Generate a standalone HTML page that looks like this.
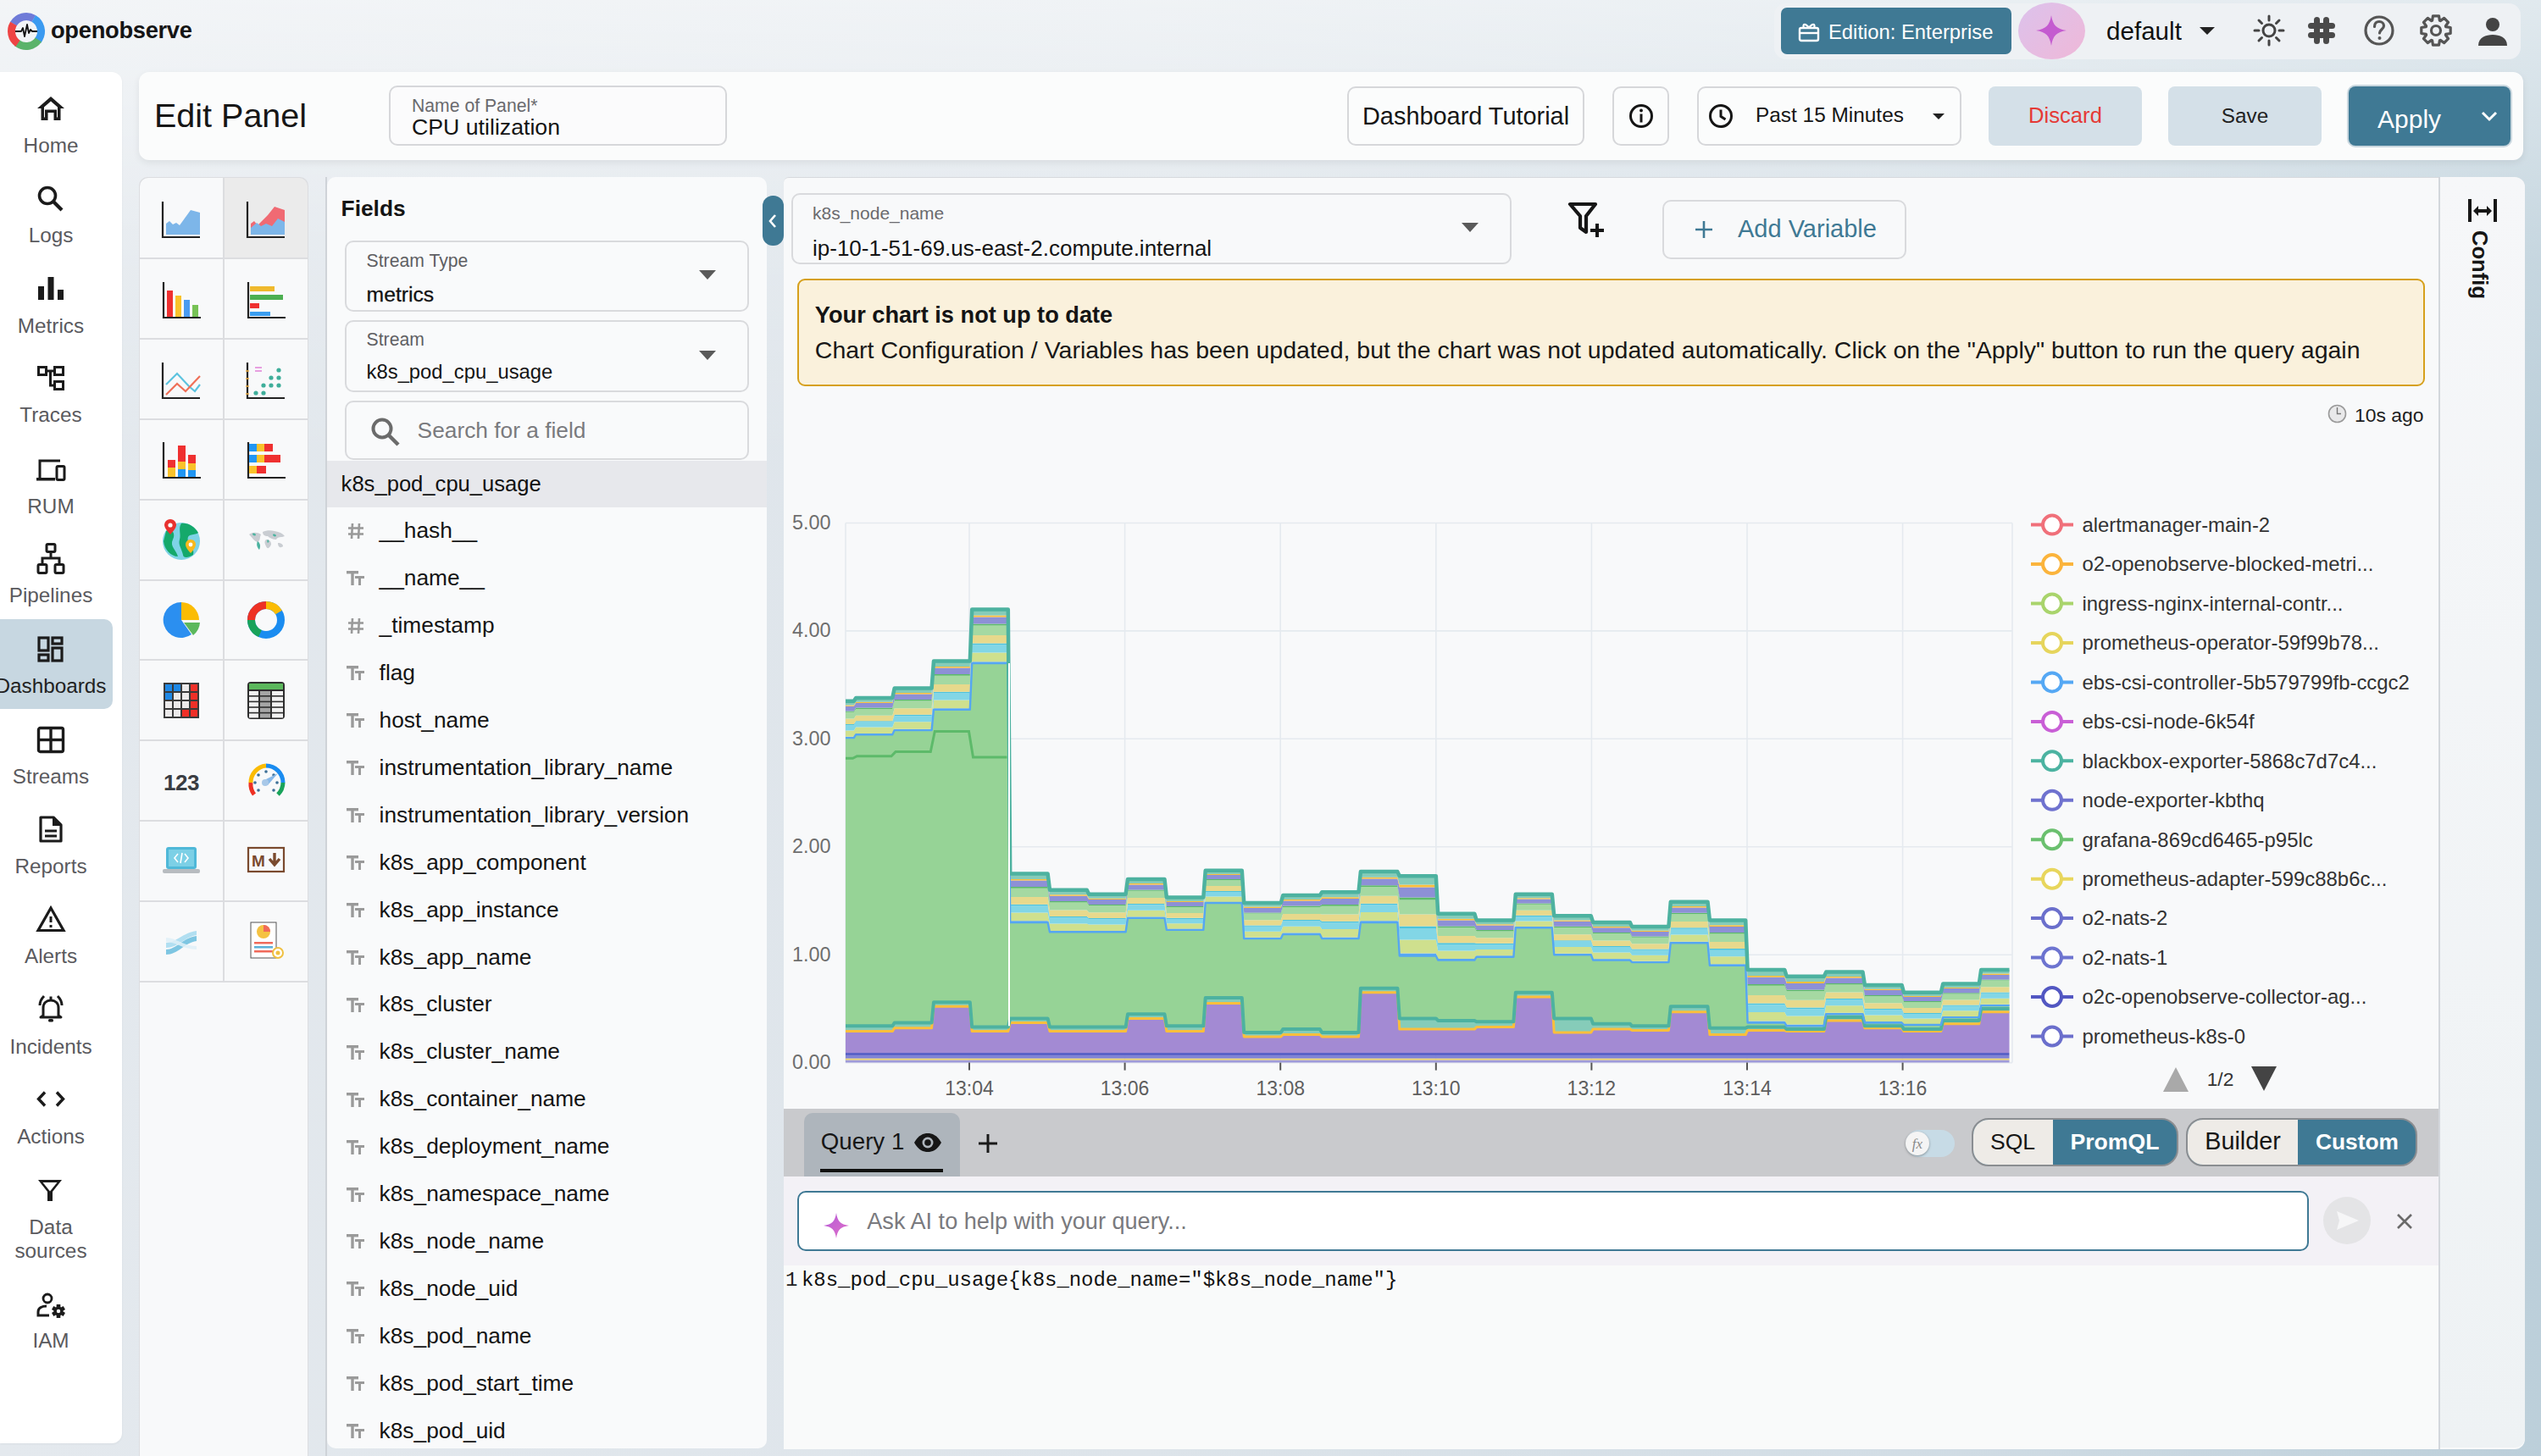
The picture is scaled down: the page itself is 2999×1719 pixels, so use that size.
<!DOCTYPE html><html><head><meta charset="utf-8"><style>
html,body{margin:0;padding:0;}
body{width:2999px;height:1719px;overflow:hidden;position:relative;font-family:"Liberation Sans",sans-serif;
background:linear-gradient(to bottom,rgba(255,255,255,0.55) 0%,rgba(255,255,255,0.15) 18%,rgba(255,255,255,0) 32%),linear-gradient(to right,#e4e9ee 0%,#dde4ea 45%,#d2dde5 75%,#bccfda 100%);}
.t{position:absolute;white-space:nowrap;line-height:1;}
.b{position:absolute;box-sizing:border-box;}
svg.b{overflow:visible;}
</style></head><body>

<svg class="b" style="left:9px;top:15px;" width="44" height="44" viewBox="0 0 44 44">
<circle cx="22" cy="22" r="17.5" fill="none" stroke="#6f7bd8" stroke-width="9" stroke-dasharray="27.5 200" transform="rotate(-150 22 22)"/>
<circle cx="22" cy="22" r="17.5" fill="none" stroke="#3b9af0" stroke-width="9" stroke-dasharray="30 200" transform="rotate(-60 22 22)"/>
<circle cx="22" cy="22" r="17.5" fill="none" stroke="#5bb36a" stroke-width="9" stroke-dasharray="29 200" transform="rotate(35 22 22)"/>
<circle cx="22" cy="22" r="17.5" fill="none" stroke="#ee4444" stroke-width="9" stroke-dasharray="26 200" transform="rotate(125 22 22)"/>
<polyline points="9,22 16,22 18,18 20,28 23,14 25,24 27,20 29,22 35,22" fill="none" stroke="#111" stroke-width="1.8" stroke-linejoin="round"/>
</svg>
<div class="t" style="left:60.0px;top:21.9px;font-size:27.3px;color:#151515;font-weight:bold;letter-spacing:-0.3px;">openobserve</div>
<div class="b" style="left:2094px;top:4px;width:881px;height:66px;background:#eef1f4;border-radius:14px;"></div>
<div class="b" style="left:2102px;top:9px;width:272px;height:55px;background:#3f7994;border-radius:7px;"></div>
<svg class="b" style="left:2122px;top:24px;" width="26" height="26" viewBox="0 0 26 26"><rect x="2" y="9" width="22" height="15" rx="2" fill="none" stroke="#fff" stroke-width="2.4"/><line x1="2" y1="15" x2="24" y2="15" stroke="#fff" stroke-width="2.4"/><path d="M13 9 C 9 3, 5 4, 7 9 M13 9 C 17 3, 21 4, 19 9" fill="none" stroke="#fff" stroke-width="2.2"/></svg>
<div class="t" style="left:2158.0px;top:25.9px;font-size:23.8px;color:#ffffff;font-weight:normal;">Edition: Enterprise</div>
<div class="b" style="left:2382px;top:3px;width:79px;height:67px;border-radius:50%;background:linear-gradient(135deg,#dcc2ec,#efb8d8);"></div>
<svg class="b" style="left:2402px;top:17px;" width="38" height="38" viewBox="0 0 38 38"><path d="M19 1 C 21 13, 25 17, 37 19 C 25 21, 21 25, 19 37 C 17 25, 13 21, 1 19 C 13 17, 17 13, 19 1 Z" fill="#c45bd0"/></svg>
<div class="t" style="left:2486.0px;top:21.9px;font-size:29.6px;color:#111;font-weight:normal;">default</div>
<svg class="b" style="left:2596px;top:32px;" width="18" height="10" viewBox="0 0 18 10"><path d="M0 0 L18 0 L9 9 Z" fill="#222"/></svg>
<svg class="b" style="left:2658px;top:16px;" width="40" height="40" viewBox="0 0 40 40"><circle cx="20" cy="20" r="7" fill="none" stroke="#444" stroke-width="3"/><line x1="32.0" y1="20.0" x2="37.0" y2="20.0" stroke="#444" stroke-width="3" stroke-linecap="round"/><line x1="28.5" y1="28.5" x2="32.0" y2="32.0" stroke="#444" stroke-width="3" stroke-linecap="round"/><line x1="20.0" y1="32.0" x2="20.0" y2="37.0" stroke="#444" stroke-width="3" stroke-linecap="round"/><line x1="11.5" y1="28.5" x2="8.0" y2="32.0" stroke="#444" stroke-width="3" stroke-linecap="round"/><line x1="8.0" y1="20.0" x2="3.0" y2="20.0" stroke="#444" stroke-width="3" stroke-linecap="round"/><line x1="11.5" y1="11.5" x2="8.0" y2="8.0" stroke="#444" stroke-width="3" stroke-linecap="round"/><line x1="20.0" y1="8.0" x2="20.0" y2="3.0" stroke="#444" stroke-width="3" stroke-linecap="round"/><line x1="28.5" y1="11.5" x2="32.0" y2="8.0" stroke="#444" stroke-width="3" stroke-linecap="round"/></svg>
<svg class="b" style="left:2722px;top:18px;" width="36" height="36" viewBox="0 0 36 36"><g fill="#4a4a4a">
<rect x="9" y="2" width="7" height="32" rx="3.5"/><rect x="20" y="2" width="7" height="32" rx="3.5"/>
<rect x="2" y="9" width="32" height="7" rx="3.5"/><rect x="2" y="20" width="32" height="7" rx="3.5"/>
</g></svg>
<svg class="b" style="left:2788px;top:16px;" width="40" height="40" viewBox="0 0 40 40"><circle cx="20" cy="20" r="16" fill="none" stroke="#555" stroke-width="3.2"/><path d="M14.5 15.5 C14.5 11.5 17 9.5 20 9.5 C23.5 9.5 25.5 12 25.5 14.5 C25.5 18.5 20.5 19 20.5 23" fill="none" stroke="#555" stroke-width="3.2" stroke-linecap="round"/><circle cx="20.5" cy="29" r="2" fill="#555"/></svg>
<svg class="b" style="left:2855px;top:16px;" width="40" height="40" viewBox="0 0 40 40"><path d="M16.5,2.8 L23.5,2.8 L24.4,8.3 L25.2,8.6 L29.7,5.4 L34.6,10.3 L31.4,14.8 L31.7,15.6 L37.2,16.5 L37.2,23.5 L31.7,24.4 L31.4,25.2 L34.6,29.7 L29.7,34.6 L25.2,31.4 L24.4,31.7 L23.5,37.2 L16.5,37.2 L15.6,31.7 L14.8,31.4 L10.3,34.6 L5.4,29.7 L8.6,25.2 L8.3,24.4 L2.8,23.5 L2.8,16.5 L8.3,15.6 L8.6,14.8 L5.4,10.3 L10.3,5.4 L14.8,8.6 L15.6,8.3Z" fill="none" stroke="#555" stroke-width="3.2" stroke-linejoin="round"/><circle cx="20" cy="20" r="5.5" fill="none" stroke="#555" stroke-width="3.2"/></svg>
<svg class="b" style="left:2922px;top:20px;" width="40" height="36" viewBox="0 0 40 36"><circle cx="20" cy="9" r="8" fill="#444"/><path d="M3 34 C3 24 12 21 20 21 C28 21 37 24 37 34 Z" fill="#444"/></svg>
<div class="b" style="left:0px;top:85px;width:144px;height:1619px;background:#ffffff;border-radius:0 12px 12px 0;box-shadow:0 1px 3px rgba(0,0,0,0.05);"></div>
<div class="b" style="left:0px;top:731px;width:133px;height:106px;background:#c7d7e1;border-radius:0 10px 10px 0;"></div>
<svg class="b" style="left:43px;top:112px;" width="34" height="36" viewBox="0 0 34 36"><path d="M17 2 L33 16 L28.5 16 L28.5 30 L20.5 30 L20.5 21 L13.5 21 L13.5 30 L5.5 30 L5.5 16 L1 16 Z M9 14.5 L9 26.5 L10 26.5 L10 17.5 L24 17.5 L24 26.5 L25 26.5 L25 14.5 L17 7.5 Z" fill="#1b1b1b" fill-rule="evenodd"/></svg>
<svg class="b" style="left:43px;top:219px;" width="34" height="36" viewBox="0 0 34 36"><circle cx="13" cy="12" r="9.5" fill="none" stroke="#1b1b1b" stroke-width="3.6"/><line x1="20" y1="19" x2="30" y2="29" stroke="#1b1b1b" stroke-width="4.2"/></svg>
<svg class="b" style="left:43px;top:326px;" width="34" height="36" viewBox="0 0 34 36"><rect x="2" y="12" width="7" height="16" fill="#1b1b1b"/><rect x="13.5" y="1" width="7" height="27" fill="#1b1b1b"/><rect x="25" y="16" width="7" height="12" fill="#1b1b1b"/></svg>
<svg class="b" style="left:43px;top:431px;" width="34" height="36" viewBox="0 0 34 36"><rect x="2.5" y="2.5" width="9" height="9" fill="none" stroke="#1b1b1b" stroke-width="3"/><rect x="21.5" y="2.5" width="10" height="9" fill="none" stroke="#1b1b1b" stroke-width="3"/><rect x="21.5" y="19.5" width="10" height="9" fill="none" stroke="#1b1b1b" stroke-width="3"/><path d="M11.5 7 L21.5 7 M16.5 7 L16.5 24 L21.5 24" fill="none" stroke="#1b1b1b" stroke-width="3"/></svg>
<svg class="b" style="left:43px;top:540px;" width="34" height="36" viewBox="0 0 34 36"><path d="M4 26 L4 4 L28 4" fill="none" stroke="#1b1b1b" stroke-width="3"/><rect x="0" y="24" width="22" height="3.5" fill="#1b1b1b"/><rect x="24" y="10.5" width="9" height="16" rx="1.5" fill="none" stroke="#1b1b1b" stroke-width="3"/></svg>
<svg class="b" style="left:43px;top:641px;" width="34" height="36" viewBox="0 0 34 36"><rect x="12" y="1.5" width="10" height="9" rx="1.5" fill="none" stroke="#1b1b1b" stroke-width="3"/><rect x="2" y="25.5" width="10" height="10" rx="1.5" fill="none" stroke="#1b1b1b" stroke-width="3"/><rect x="22" y="25.5" width="10" height="10" rx="1.5" fill="none" stroke="#1b1b1b" stroke-width="3"/><path d="M17 10.5 L17 18 M7 25.5 L7 18 L27 18 L27 25.5" fill="none" stroke="#1b1b1b" stroke-width="3"/></svg>
<svg class="b" style="left:43px;top:751px;" width="34" height="36" viewBox="0 0 34 36"><rect x="3" y="2" width="11" height="15" fill="none" stroke="#1b1b1b" stroke-width="3.2"/><rect x="3" y="22" width="11" height="7" fill="none" stroke="#1b1b1b" stroke-width="3.2"/><rect x="19" y="2" width="11" height="7" fill="none" stroke="#1b1b1b" stroke-width="3.2"/><rect x="19" y="14" width="11" height="15" fill="none" stroke="#1b1b1b" stroke-width="3.2"/></svg>
<svg class="b" style="left:43px;top:857px;" width="34" height="36" viewBox="0 0 34 36"><rect x="2.5" y="2.5" width="29" height="28" rx="2" fill="none" stroke="#1b1b1b" stroke-width="3.4"/><line x1="17" y1="2" x2="17" y2="31" stroke="#1b1b1b" stroke-width="3.4"/><line x1="2" y1="16.5" x2="32" y2="16.5" stroke="#1b1b1b" stroke-width="3.4"/></svg>
<svg class="b" style="left:43px;top:962px;" width="34" height="36" viewBox="0 0 34 36"><path d="M5 3 L20 3 L29 12 L29 31 L5 31 Z" fill="none" stroke="#1b1b1b" stroke-width="3.2" stroke-linejoin="round"/><path d="M19 3 L19 13 L29 13" fill="#1b1b1b"/><line x1="10" y1="19" x2="24" y2="19" stroke="#1b1b1b" stroke-width="3"/><line x1="10" y1="25" x2="24" y2="25" stroke="#1b1b1b" stroke-width="3"/></svg>
<svg class="b" style="left:43px;top:1069px;" width="34" height="36" viewBox="0 0 34 36"><path d="M17 3 L32 29.5 L2 29.5 Z" fill="none" stroke="#1b1b1b" stroke-width="3.2" stroke-linejoin="miter"/><line x1="17" y1="13" x2="17" y2="20" stroke="#1b1b1b" stroke-width="3"/><rect x="15.5" y="23" width="3" height="3" fill="#1b1b1b"/></svg>
<svg class="b" style="left:43px;top:1174px;" width="34" height="36" viewBox="0 0 34 36"><path d="M8 25 L8 16 C8 10 12 7 17 7 C22 7 26 10 26 16 L26 25 L29 27 L5 27 Z" fill="none" stroke="#1b1b1b" stroke-width="3" stroke-linejoin="round"/><rect x="14" y="29" width="6" height="3.5" rx="1.5" fill="#1b1b1b"/><path d="M4 13 C4 8 6 5 9 2 M30 13 C30 8 28 5 25 2" fill="none" stroke="#1b1b1b" stroke-width="3"/><rect x="15.5" y="2.5" width="3" height="5" fill="#1b1b1b"/></svg>
<svg class="b" style="left:43px;top:1287px;" width="34" height="36" viewBox="0 0 34 36"><path d="M10 2.5 L2.5 10.5 L10 18.5 M24 2.5 L31.5 10.5 L24 18.5" fill="none" stroke="#1b1b1b" stroke-width="3.4"/></svg>
<svg class="b" style="left:43px;top:1391px;" width="34" height="36" viewBox="0 0 34 36"><path d="M2 2 L30 2 L19 16 L19 27 L13 27 L13 16 Z M7.5 5 L16 15.5 L24.5 5 Z" fill="#1b1b1b" fill-rule="evenodd"/></svg>
<svg class="b" style="left:43px;top:1526px;" width="34" height="36" viewBox="0 0 34 36"><circle cx="13" cy="7" r="5" fill="none" stroke="#1b1b1b" stroke-width="2.8"/><path d="M15 27 L2 27 L2 23 C2 18 7 16 12 16" fill="none" stroke="#1b1b1b" stroke-width="3"/><path d="M23.7,14.1 L28.3,14.1 L28.4,17.0 L29.1,17.4 L31.7,16.1 L34.0,20.0 L31.6,21.6 L31.6,22.4 L34.0,24.0 L31.7,27.9 L29.1,26.6 L28.4,27.0 L28.3,29.9 L23.7,29.9 L23.6,27.0 L22.9,26.6 L20.3,27.9 L18.0,24.0 L20.4,22.4 L20.4,21.6 L18.0,20.0 L20.3,16.1 L22.9,17.4 L23.6,17.0Z M26,19.8 A2.2,2.2 0 1 0 26,24.2 A2.2,2.2 0 1 0 26,19.8Z" fill="#1b1b1b" fill-rule="evenodd"/></svg>
<div class="t" style="left:-20.0px;top:159.9px;width:160px;text-align:center;font-size:24.3px;color:#5a5a5e;font-weight:normal;">Home</div>
<div class="t" style="left:-20.0px;top:265.9px;width:160px;text-align:center;font-size:24.3px;color:#5a5a5e;font-weight:normal;">Logs</div>
<div class="t" style="left:-20.0px;top:372.9px;width:160px;text-align:center;font-size:24.3px;color:#5a5a5e;font-weight:normal;">Metrics</div>
<div class="t" style="left:-20.0px;top:478.4px;width:160px;text-align:center;font-size:24.3px;color:#5a5a5e;font-weight:normal;">Traces</div>
<div class="t" style="left:-20.0px;top:585.5px;width:160px;text-align:center;font-size:24.3px;color:#5a5a5e;font-weight:normal;">RUM</div>
<div class="t" style="left:-20.0px;top:690.9px;width:160px;text-align:center;font-size:24.3px;color:#5a5a5e;font-weight:normal;">Pipelines</div>
<div class="t" style="left:-20.0px;top:797.6px;width:160px;text-align:center;font-size:24.3px;color:#222;font-weight:normal;">Dashboards</div>
<div class="t" style="left:-20.0px;top:904.7px;width:160px;text-align:center;font-size:24.3px;color:#5a5a5e;font-weight:normal;">Streams</div>
<div class="t" style="left:-20.0px;top:1010.6px;width:160px;text-align:center;font-size:24.3px;color:#5a5a5e;font-weight:normal;">Reports</div>
<div class="t" style="left:-20.0px;top:1116.9px;width:160px;text-align:center;font-size:24.3px;color:#5a5a5e;font-weight:normal;">Alerts</div>
<div class="t" style="left:-20.0px;top:1223.5px;width:160px;text-align:center;font-size:24.3px;color:#5a5a5e;font-weight:normal;">Incidents</div>
<div class="t" style="left:-20.0px;top:1329.6px;width:160px;text-align:center;font-size:24.3px;color:#5a5a5e;font-weight:normal;">Actions</div>
<div class="t" style="left:-20.0px;top:1436.5px;width:160px;text-align:center;font-size:24.3px;color:#5a5a5e;font-weight:normal;">Data</div>
<div class="t" style="left:-20.0px;top:1464.5px;width:160px;text-align:center;font-size:24.3px;color:#5a5a5e;font-weight:normal;">sources</div>
<div class="t" style="left:-20.0px;top:1571.1px;width:160px;text-align:center;font-size:24.3px;color:#5a5a5e;font-weight:normal;">IAM</div>
<div class="b" style="left:164px;top:85px;width:2814px;height:104px;background:#fbfcfc;border-radius:12px;box-shadow:0 3px 8px rgba(0,0,0,0.07);"></div>
<div class="t" style="left:182.0px;top:116.6px;font-size:39.5px;color:#161616;font-weight:normal;">Edit Panel</div>
<div class="b" style="left:459px;top:101px;width:399px;height:71px;border:2px solid #d6d7da;border-radius:10px;background:#fbfbfc;"></div>
<div class="t" style="left:486.0px;top:114.1px;font-size:21.2px;color:#6a6a6e;font-weight:normal;">Name of Panel*</div>
<div class="t" style="left:486.0px;top:137.4px;font-size:26.7px;color:#141414;font-weight:normal;">CPU utilization</div>
<div class="b" style="left:1590px;top:102px;width:280px;height:70px;border:2px solid #d6d7da;border-radius:10px;"></div>
<div class="t" style="left:1608.0px;top:122.5px;font-size:28.9px;color:#161616;font-weight:normal;">Dashboard Tutorial</div>
<div class="b" style="left:1903px;top:102px;width:67px;height:70px;border:2px solid #d6d7da;border-radius:10px;"></div>
<svg class="b" style="left:1921px;top:121px;" width="32" height="32" viewBox="0 0 32 32"><circle cx="16" cy="16" r="12.5" fill="none" stroke="#151515" stroke-width="3"/><rect x="14.5" y="13.5" width="3" height="10" fill="#151515"/><circle cx="16" cy="9.5" r="1.9" fill="#151515"/></svg>
<div class="b" style="left:2003px;top:102px;width:312px;height:70px;border:2px solid #d6d7da;border-radius:10px;"></div>
<svg class="b" style="left:2015px;top:121px;" width="32" height="32" viewBox="0 0 32 32"><circle cx="16" cy="16" r="12.5" fill="none" stroke="#151515" stroke-width="3"/><path d="M16 8.5 L16 16.5 L21.5 20" fill="none" stroke="#151515" stroke-width="3"/></svg>
<div class="t" style="left:2072.0px;top:123.7px;font-size:24.4px;color:#161616;font-weight:normal;">Past 15 Minutes</div>
<svg class="b" style="left:2281px;top:134px;" width="14" height="8" viewBox="0 0 14 8"><path d="M0 0 L14 0 L7 7 Z" fill="#222"/></svg>
<div class="b" style="left:2347px;top:102px;width:181px;height:70px;background:#d4e0e8;border-radius:8px;"></div>
<div class="t" style="left:2347.5px;top:124.3px;width:180px;text-align:center;font-size:25.6px;color:#e53935;font-weight:normal;">Discard</div>
<div class="b" style="left:2559px;top:102px;width:181px;height:70px;background:#d4e0e8;border-radius:8px;"></div>
<div class="t" style="left:2559.5px;top:125.4px;width:180px;text-align:center;font-size:24.3px;color:#222;font-weight:normal;">Save</div>
<div class="b" style="left:2772px;top:102px;width:191px;height:70px;background:#3f7994;border-radius:8px;box-shadow:0 0 0 2px #c9d7df;"></div>
<div class="t" style="left:2806.0px;top:125.6px;font-size:30px;color:#ffffff;font-weight:normal;">Apply</div>
<svg class="b" style="left:2928px;top:131px;" width="20" height="14" viewBox="0 0 20 14"><path d="M2 2 L10 10 L18 2" fill="none" stroke="#fff" stroke-width="3"/></svg>
<div class="b" style="left:164px;top:209px;width:200px;height:1510px;background:#dcdde0;border-radius:10px 10px 0 0;"></div>
<div class="b" style="left:164.5px;top:209.6px;width:98.5px;height:94.8px;background:#f8f9fa;border-top-left-radius:10px;"></div>
<svg class="b" style="left:190px;top:234px;" width="48" height="48" viewBox="0 0 48 48"><path d="M2 4 L2 46 L46 46" fill="none" stroke="#222" stroke-width="2.2"/><path d="M6 42 L6 30 L10 27 L14 31 L18 29 L22 32 L35 14 L46 17 L46 43 L6 43 Z" fill="#7db6e9"/></svg>
<div class="b" style="left:265px;top:209.6px;width:97.7px;height:94.8px;background:#ebebeb;border-top-right-radius:10px;"></div>
<svg class="b" style="left:290px;top:234px;" width="48" height="48" viewBox="0 0 48 48"><path d="M2 4 L2 46 L46 46" fill="none" stroke="#222" stroke-width="2.2"/><path d="M6 42 L6 30 L10 27 L14 32 L26 20 L34 10 L46 14 L46 43 Z" fill="#f06a73"/><path d="M6 43 L6 35 L13 29 L18 33 L24 30 L31 33 L38 24 L46 28 L46 43 Z" fill="#7db6e9"/></svg>
<div class="b" style="left:164.5px;top:306.4px;width:98.5px;height:92.8px;background:#f8f9fa;"></div>
<svg class="b" style="left:190px;top:329px;" width="48" height="48" viewBox="0 0 48 48"><path d="M3 4 L3 46 L47 46" fill="none" stroke="#222" stroke-width="2.2"/><rect x="7" y="14" width="7" height="31" fill="#ef3030"/><rect x="17" y="20" width="7" height="25" fill="#f9c22b"/><rect x="27" y="25" width="7" height="20" fill="#4a9bf0"/><rect x="37" y="31" width="7" height="14" fill="#77c255"/></svg>
<div class="b" style="left:265px;top:306.4px;width:97.7px;height:92.8px;background:#f8f9fa;"></div>
<svg class="b" style="left:290px;top:329px;" width="48" height="48" viewBox="0 0 48 48"><path d="M3 4 L3 46 L47 46" fill="none" stroke="#222" stroke-width="2.2"/><rect x="5" y="9" width="29" height="6" fill="#f0b92c"/><rect x="5" y="19" width="39" height="6" fill="#4caf50"/><rect x="5" y="29" width="11" height="6" fill="#ef3030"/><rect x="5" y="39" width="24" height="5" fill="#3a9ef0"/></svg>
<div class="b" style="left:164.5px;top:401.2px;width:98.5px;height:92.8px;background:#f8f9fa;"></div>
<svg class="b" style="left:190px;top:424px;" width="48" height="48" viewBox="0 0 48 48"><path d="M2 4 L2 46 L46 46" fill="none" stroke="#222" stroke-width="2.2"/><path d="M6 30 L19 17 L33 32 L40 38 L46 30" fill="none" stroke="#5cc3df" stroke-width="2.2"/><path d="M6 42 L19 29 L29 38 L46 20" fill="none" stroke="#ef7058" stroke-width="2.2"/></svg>
<div class="b" style="left:265px;top:401.2px;width:97.7px;height:92.8px;background:#f8f9fa;"></div>
<svg class="b" style="left:290px;top:424px;" width="48" height="48" viewBox="0 0 48 48"><path d="M2 4 L2 46 L46 46" fill="none" stroke="#222" stroke-width="2.2"/><path d="M11 10 L19 10 M11 14 L19 14" stroke="#e7a0e0" stroke-width="1.8"/><g fill="#3fae9a"><circle cx="12" cy="40" r="2.6"/><circle cx="21" cy="40" r="2.6"/><circle cx="21" cy="31" r="2.6"/><circle cx="30" cy="31" r="2.6"/><circle cx="39" cy="31" r="2.6"/><circle cx="30" cy="22" r="2.6"/><circle cx="39" cy="22" r="2.6"/><circle cx="39" cy="13" r="2.6"/></g><g stroke="#f0b24a" stroke-width="1.5"><line x1="0" y1="14" x2="4" y2="14"/><line x1="0" y1="23" x2="4" y2="23"/><line x1="0" y1="32" x2="4" y2="32"/><line x1="0" y1="41" x2="4" y2="41"/></g></svg>
<div class="b" style="left:164.5px;top:496.0px;width:98.5px;height:92.8px;background:#f8f9fa;"></div>
<svg class="b" style="left:190px;top:518px;" width="48" height="48" viewBox="0 0 48 48"><path d="M3 4 L3 46 L47 46" fill="none" stroke="#222" stroke-width="2.2"/><rect x="8" y="25" width="9" height="9" fill="#ef3030"/><rect x="8" y="34" width="9" height="11" fill="#f9c22b"/><rect x="20" y="8" width="9" height="19" fill="#ef3030"/><rect x="20" y="27" width="9" height="9" fill="#f9c22b"/><rect x="20" y="36" width="9" height="9" fill="#2196f3"/><rect x="32" y="19" width="9" height="10" fill="#ef3030"/><rect x="32" y="29" width="9" height="8" fill="#f9c22b"/><rect x="32" y="37" width="9" height="8" fill="#2196f3"/></svg>
<div class="b" style="left:265px;top:496.0px;width:97.7px;height:92.8px;background:#f8f9fa;"></div>
<svg class="b" style="left:290px;top:518px;" width="48" height="48" viewBox="0 0 48 48"><path d="M3 4 L3 46 L47 46" fill="none" stroke="#222" stroke-width="2.2"/><rect x="4" y="6" width="9" height="9" fill="#2196f3"/><rect x="13" y="6" width="9" height="9" fill="#f9c22b"/><rect x="22" y="6" width="10" height="9" fill="#ef3030"/><rect x="4" y="19" width="9" height="9" fill="#2196f3"/><rect x="13" y="19" width="9" height="9" fill="#f9c22b"/><rect x="22" y="19" width="19" height="9" fill="#ef3030"/><rect x="4" y="32" width="9" height="9" fill="#f9c22b"/><rect x="13" y="32" width="11" height="9" fill="#ef3030"/></svg>
<div class="b" style="left:164.5px;top:590.8px;width:98.5px;height:92.8px;background:#f8f9fa;"></div>
<svg class="b" style="left:190px;top:613px;" width="48" height="48" viewBox="0 0 48 48"><circle cx="24" cy="26" r="22" fill="#7fd3e6"/><path d="M6 14 C12 10 18 16 14 24 C10 32 18 36 20 44 C12 44 4 36 3 26 Z M24 5 C32 4 40 9 44 16 C38 20 30 16 32 26 C34 34 40 34 38 42 C32 46 26 46 26 42 C24 34 20 30 22 24 C24 18 20 10 24 5 Z" fill="#14a96b"/><path d="M11 0 C6 0 4 4 4 7 C4 11 11 18 11 18 C11 18 18 11 18 7 C18 4 16 0 11 0 Z" fill="#e8312f"/><circle cx="11" cy="7" r="2.6" fill="#fff"/><path d="M35 24 C31 24 29 27 29 30 C29 34 35 40 35 40 C35 40 41 34 41 30 C41 27 39 24 35 24 Z" fill="#f8b91c"/><circle cx="35" cy="30" r="2.4" fill="#fff"/></svg>
<div class="b" style="left:265px;top:590.8px;width:97.7px;height:92.8px;background:#f8f9fa;"></div>
<svg class="b" style="left:290px;top:613px;" width="48" height="48" viewBox="0 0 48 48"><g fill="#c9cdd2"><path d="M4 18 C8 15 14 15 18 18 C16 22 18 24 14 27 C10 26 8 22 4 18 Z"/><path d="M20 15 C24 13 30 13 34 14 C40 15 44 17 46 20 C42 22 38 20 36 24 C32 24 28 22 26 20 C22 20 20 18 20 15 Z"/><path d="M24 24 C28 24 30 26 30 30 C28 34 26 36 24 32 C22 28 22 26 24 24 Z"/><path d="M38 28 C42 28 44 30 44 32 C42 34 38 34 38 28 Z"/></g><g fill="#4bb3a0"><path d="M14 26 C17 28 18 32 16 36 C14 34 12 30 14 26 Z"/><path d="M8 17 C10 16 12 17 12 19 C10 20 8 19 8 17 Z"/><path d="M32 18 C34 17 36 18 36 20 C34 21 32 20 32 18 Z"/><path d="M26 24 C28 25 28 27 26 28 C25 27 25 25 26 24 Z"/></g></svg>
<div class="b" style="left:164.5px;top:685.6px;width:98.5px;height:92.8px;background:#f8f9fa;"></div>
<svg class="b" style="left:190px;top:708px;" width="48" height="48" viewBox="0 0 48 48"><path d="M24 24 L24 3 A21 21 0 0 1 45 24 Z" fill="#fbbc04"/><path d="M27 27 L46 27 A21 21 0 0 1 38 42 Z" fill="#5cb85c"/><path d="M24 24 L36 41 A21 21 0 1 1 24 3 Z" fill="#2b8ff0"/></svg>
<div class="b" style="left:265px;top:685.6px;width:97.7px;height:92.8px;background:#f8f9fa;"></div>
<svg class="b" style="left:290px;top:708px;" width="48" height="48" viewBox="0 0 48 48"><circle cx="24" cy="24" r="17.5" fill="none" stroke="#1a8cf0" stroke-width="9"/><path d="M24 6.5 A17.5 17.5 0 0 1 39 15" fill="none" stroke="#fbbc04" stroke-width="9"/><path d="M6.5 24 A17.5 17.5 0 0 1 24 6.5" fill="none" stroke="#ee3124" stroke-width="9"/><path d="M17 40 A17.5 17.5 0 0 1 6.5 24" fill="none" stroke="#19a35a" stroke-width="9"/></svg>
<div class="b" style="left:164.5px;top:780.4px;width:98.5px;height:92.8px;background:#f8f9fa;"></div>
<svg class="b" style="left:190px;top:803px;" width="48" height="48" viewBox="0 0 48 48"><rect x="3" y="3" width="42" height="42" fill="#3a3a3a"/><rect x="5" y="5" width="8" height="8" fill="#1e88e5"/><rect x="15" y="5" width="8" height="8" fill="#1e88e5"/><rect x="25" y="5" width="8" height="8" fill="#eceaea"/><rect x="35" y="5" width="8" height="8" fill="#f03028"/><rect x="5" y="15" width="8" height="8" fill="#1e88e5"/><rect x="15" y="15" width="8" height="8" fill="#eceaea"/><rect x="25" y="15" width="8" height="8" fill="#eceaea"/><rect x="35" y="15" width="8" height="8" fill="#f03028"/><rect x="5" y="25" width="8" height="8" fill="#eceaea"/><rect x="15" y="25" width="8" height="8" fill="#eceaea"/><rect x="25" y="25" width="8" height="8" fill="#eceaea"/><rect x="35" y="25" width="8" height="8" fill="#f03028"/><rect x="5" y="35" width="8" height="8" fill="#eceaea"/><rect x="15" y="35" width="8" height="8" fill="#eceaea"/><rect x="25" y="35" width="8" height="8" fill="#f03028"/><rect x="35" y="35" width="8" height="8" fill="#f03028"/></svg>
<div class="b" style="left:265px;top:780.4px;width:97.7px;height:92.8px;background:#f8f9fa;"></div>
<svg class="b" style="left:290px;top:803px;" width="48" height="48" viewBox="0 0 48 48"><rect x="2" y="2" width="44" height="44" rx="4" fill="#2e2e2e"/><rect x="4" y="4" width="40" height="7" fill="#5cb85c"/><rect x="4" y="13.0" width="11" height="5" fill="#f2f2f2"/><rect x="17" y="13.0" width="12" height="5" fill="#a5a5a5"/><rect x="31" y="13.0" width="13" height="5" fill="#f2f2f2"/><rect x="4" y="19.6" width="11" height="5" fill="#f2f2f2"/><rect x="17" y="19.6" width="12" height="5" fill="#a5a5a5"/><rect x="31" y="19.6" width="13" height="5" fill="#f2f2f2"/><rect x="4" y="26.2" width="11" height="5" fill="#f2f2f2"/><rect x="17" y="26.2" width="12" height="5" fill="#a5a5a5"/><rect x="31" y="26.2" width="13" height="5" fill="#f2f2f2"/><rect x="4" y="32.8" width="11" height="5" fill="#f2f2f2"/><rect x="17" y="32.8" width="12" height="5" fill="#a5a5a5"/><rect x="31" y="32.8" width="13" height="5" fill="#f2f2f2"/><rect x="4" y="39.4" width="11" height="5" fill="#f2f2f2"/><rect x="17" y="39.4" width="12" height="5" fill="#a5a5a5"/><rect x="31" y="39.4" width="13" height="5" fill="#f2f2f2"/></svg>
<div class="b" style="left:164.5px;top:875.2px;width:98.5px;height:92.8px;background:#f8f9fa;"></div>
<svg class="b" style="left:190px;top:898px;" width="48" height="48" viewBox="0 0 48 48"><text x="24" y="35" text-anchor="middle" font-family="Liberation Sans" font-weight="bold" font-size="26" fill="#3a3d42" letter-spacing="-0.5">123</text></svg>
<div class="b" style="left:265px;top:875.2px;width:97.7px;height:92.8px;background:#f8f9fa;"></div>
<svg class="b" style="left:290px;top:898px;" width="48" height="48" viewBox="0 0 48 48"><path d="M10 40 A20 20 0 0 1 6 26" fill="none" stroke="#ee3124" stroke-width="5"/><path d="M6 26 A20 20 0 0 1 24 6" fill="none" stroke="#fbbc04" stroke-width="5"/><path d="M24 6 A20 20 0 0 1 44 26" fill="none" stroke="#1a8cf0" stroke-width="5"/><path d="M44 26 A20 20 0 0 1 38 40" fill="none" stroke="#19a35a" stroke-width="5"/><g fill="#3b6f97"><circle cx="24" cy="13" r="1.8"/><circle cx="15" cy="17" r="1.8"/><circle cx="33" cy="17" r="1.8"/><circle cx="11" cy="26" r="1.8"/><circle cx="37" cy="26" r="1.8"/><circle cx="15" cy="35" r="1.8"/><circle cx="33" cy="35" r="1.8"/></g><path d="M20 24 L38 15 L26 29 Z" fill="#87b8e8"/><circle cx="23" cy="26" r="4" fill="#a8c8e8"/></svg>
<div class="b" style="left:164.5px;top:970.0px;width:98.5px;height:92.8px;background:#f8f9fa;"></div>
<svg class="b" style="left:190px;top:992px;" width="48" height="48" viewBox="0 0 48 48"><rect x="6" y="8" width="36" height="26" rx="3" fill="#4fb8d8"/><rect x="9" y="11" width="30" height="20" fill="#7cd0e6"/><rect x="2" y="34" width="44" height="5" rx="2" fill="#b8bcc0"/><path d="M20 16 L16 21 L20 26 M28 16 L32 21 L28 26 M25 15 L23 27" fill="none" stroke="#fff" stroke-width="1.6"/></svg>
<div class="b" style="left:265px;top:970.0px;width:97.7px;height:92.8px;background:#f8f9fa;"></div>
<svg class="b" style="left:290px;top:992px;" width="48" height="48" viewBox="0 0 48 48"><rect x="3" y="9" width="42" height="28" fill="none" stroke="#7a4a2e" stroke-width="2.2"/><text x="15" y="31" text-anchor="middle" font-family="Liberation Sans" font-weight="bold" font-size="19" fill="#7a4a2e">M</text><path d="M34 15 L34 27 M28 22 L34 29 L40 22" fill="none" stroke="#7a4a2e" stroke-width="3.4"/></svg>
<div class="b" style="left:164.5px;top:1064.8px;width:98.5px;height:92.8px;background:#f8f9fa;"></div>
<svg class="b" style="left:190px;top:1087px;" width="48" height="48" viewBox="0 0 48 48"><path d="M6 34 C18 34 26 20 42 18 L42 24 C28 26 20 40 6 40 Z" fill="#7ec6e2"/><path d="M6 26 C18 26 26 14 42 12 L42 17 C28 19 20 32 6 32 Z" fill="#a8dbef" opacity="0.9"/><path d="M6 20 C18 20 26 30 42 30 L42 34 C26 34 18 25 6 25 Z" fill="#dff0f7" opacity="0.85"/></svg>
<div class="b" style="left:265px;top:1064.8px;width:97.7px;height:92.8px;background:#f8f9fa;"></div>
<svg class="b" style="left:290px;top:1087px;" width="48" height="48" viewBox="0 0 48 48"><rect x="6" y="2" width="30" height="42" fill="#fff" stroke="#555" stroke-width="1"/><circle cx="21" cy="13" r="8" fill="#f5c242"/><path d="M21 13 L21 5 A8 8 0 0 1 29 13 Z" fill="#f06a5a"/><g><rect x="10" y="25" width="22" height="2.5" fill="#f06a5a"/><rect x="10" y="30" width="22" height="2.5" fill="#5bb0d8"/><rect x="10" y="35" width="22" height="2.5" fill="#f06a5a"/></g><circle cx="38" cy="38" r="6" fill="#fff" stroke="#f0c040" stroke-width="2"/><circle cx="38" cy="38" r="2.5" fill="#f0c040"/></svg>
<div class="b" style="left:164.5px;top:1159.6px;width:198.2px;height:559.4000000000001px;background:#f8f9fa;"></div>
<div class="b" style="left:384px;top:209px;width:2px;height:1510px;background:#cfd3d8;"></div>
<div class="b" style="left:386px;top:209px;width:519px;height:1501px;background:#f9fafb;border-radius:10px;"></div>
<div class="t" style="left:402.6px;top:233.1px;font-size:26.3px;color:#141414;font-weight:bold;">Fields</div>
<div class="b" style="left:407px;top:284px;width:477px;height:84px;border:2px solid #d9dadd;border-radius:10px;"></div>
<div class="t" style="left:432.6px;top:296.6px;font-size:21.2px;color:#5f5f63;font-weight:normal;">Stream Type</div>
<div class="t" style="left:432.6px;top:336.1px;font-size:24.7px;color:#121212;font-weight:normal;-webkit-text-stroke:0.3px #121212;">metrics</div>
<svg class="b" style="left:825px;top:319px;" width="20" height="11" viewBox="0 0 20 11"><path d="M0 0 L20 0 L10 11 Z" fill="#5a5a5a"/></svg>
<div class="b" style="left:407px;top:378px;width:477px;height:85px;border:2px solid #d9dadd;border-radius:10px;"></div>
<div class="t" style="left:432.6px;top:390.4px;font-size:21.2px;color:#5f5f63;font-weight:normal;">Stream</div>
<div class="t" style="left:432.6px;top:427.4px;font-size:23.8px;color:#141414;font-weight:normal;">k8s_pod_cpu_usage</div>
<svg class="b" style="left:825px;top:414px;" width="20" height="11" viewBox="0 0 20 11"><path d="M0 0 L20 0 L10 11 Z" fill="#5a5a5a"/></svg>
<div class="b" style="left:407px;top:473px;width:477px;height:70px;border:2px solid #d9dadd;border-radius:10px;"></div>
<svg class="b" style="left:436px;top:491px;" width="38" height="38" viewBox="0 0 38 38"><circle cx="15" cy="15" r="10.5" fill="none" stroke="#6b6b6b" stroke-width="4"/><line x1="22.5" y1="22.5" x2="34" y2="34" stroke="#6b6b6b" stroke-width="4.5"/></svg>
<div class="t" style="left:492.6px;top:495.1px;font-size:26.3px;color:#7a7a7e;font-weight:normal;">Search for a field</div>
<div class="b" style="left:386px;top:544px;width:519px;height:55px;background:#e7e8ec;"></div>
<div class="t" style="left:402.6px;top:558.6px;font-size:25.6px;color:#121212;font-weight:normal;">k8s_pod_cpu_usage</div>
<svg class="b" style="left:410px;top:616.2px;" width="21" height="22" viewBox="0 0 21 22"><g stroke="#9a9a9a" stroke-width="2.6"><line x1="6" y1="2" x2="5" y2="20"/><line x1="14" y1="2" x2="13" y2="20"/><line x1="1" y1="7.5" x2="19" y2="7.5"/><line x1="1" y1="14.5" x2="19" y2="14.5"/></g></svg>
<div class="t" style="left:447.6px;top:612.9px;font-size:26.3px;color:#141414;font-weight:normal;">__hash__</div>
<svg class="b" style="left:409px;top:673.1500000000001px;" width="22" height="20" viewBox="0 0 22 20"><g fill="#9a9a9a"><rect x="0" y="1" width="14" height="3.4"/><rect x="5.3" y="1" width="3.4" height="17"/><rect x="10" y="7" width="11" height="3"/><rect x="14" y="7" width="3" height="11"/></g></svg>
<div class="t" style="left:447.6px;top:668.9px;font-size:26.3px;color:#141414;font-weight:normal;">__name__</div>
<svg class="b" style="left:410px;top:728.1px;" width="21" height="22" viewBox="0 0 21 22"><g stroke="#9a9a9a" stroke-width="2.6"><line x1="6" y1="2" x2="5" y2="20"/><line x1="14" y1="2" x2="13" y2="20"/><line x1="1" y1="7.5" x2="19" y2="7.5"/><line x1="1" y1="14.5" x2="19" y2="14.5"/></g></svg>
<div class="t" style="left:447.6px;top:724.8px;font-size:26.3px;color:#141414;font-weight:normal;">_timestamp</div>
<svg class="b" style="left:409px;top:785.0500000000001px;" width="22" height="20" viewBox="0 0 22 20"><g fill="#9a9a9a"><rect x="0" y="1" width="14" height="3.4"/><rect x="5.3" y="1" width="3.4" height="17"/><rect x="10" y="7" width="11" height="3"/><rect x="14" y="7" width="3" height="11"/></g></svg>
<div class="t" style="left:447.6px;top:780.8px;font-size:26.3px;color:#141414;font-weight:normal;">flag</div>
<svg class="b" style="left:409px;top:841.0px;" width="22" height="20" viewBox="0 0 22 20"><g fill="#9a9a9a"><rect x="0" y="1" width="14" height="3.4"/><rect x="5.3" y="1" width="3.4" height="17"/><rect x="10" y="7" width="11" height="3"/><rect x="14" y="7" width="3" height="11"/></g></svg>
<div class="t" style="left:447.6px;top:836.7px;font-size:26.3px;color:#141414;font-weight:normal;">host_name</div>
<svg class="b" style="left:409px;top:896.95px;" width="22" height="20" viewBox="0 0 22 20"><g fill="#9a9a9a"><rect x="0" y="1" width="14" height="3.4"/><rect x="5.3" y="1" width="3.4" height="17"/><rect x="10" y="7" width="11" height="3"/><rect x="14" y="7" width="3" height="11"/></g></svg>
<div class="t" style="left:447.6px;top:892.7px;font-size:26.3px;color:#141414;font-weight:normal;">instrumentation_library_name</div>
<svg class="b" style="left:409px;top:952.9000000000001px;" width="22" height="20" viewBox="0 0 22 20"><g fill="#9a9a9a"><rect x="0" y="1" width="14" height="3.4"/><rect x="5.3" y="1" width="3.4" height="17"/><rect x="10" y="7" width="11" height="3"/><rect x="14" y="7" width="3" height="11"/></g></svg>
<div class="t" style="left:447.6px;top:948.6px;font-size:26.3px;color:#141414;font-weight:normal;">instrumentation_library_version</div>
<svg class="b" style="left:409px;top:1008.8500000000001px;" width="22" height="20" viewBox="0 0 22 20"><g fill="#9a9a9a"><rect x="0" y="1" width="14" height="3.4"/><rect x="5.3" y="1" width="3.4" height="17"/><rect x="10" y="7" width="11" height="3"/><rect x="14" y="7" width="3" height="11"/></g></svg>
<div class="t" style="left:447.6px;top:1004.6px;font-size:26.3px;color:#141414;font-weight:normal;">k8s_app_component</div>
<svg class="b" style="left:409px;top:1064.8000000000002px;" width="22" height="20" viewBox="0 0 22 20"><g fill="#9a9a9a"><rect x="0" y="1" width="14" height="3.4"/><rect x="5.3" y="1" width="3.4" height="17"/><rect x="10" y="7" width="11" height="3"/><rect x="14" y="7" width="3" height="11"/></g></svg>
<div class="t" style="left:447.6px;top:1060.5px;font-size:26.3px;color:#141414;font-weight:normal;">k8s_app_instance</div>
<svg class="b" style="left:409px;top:1120.75px;" width="22" height="20" viewBox="0 0 22 20"><g fill="#9a9a9a"><rect x="0" y="1" width="14" height="3.4"/><rect x="5.3" y="1" width="3.4" height="17"/><rect x="10" y="7" width="11" height="3"/><rect x="14" y="7" width="3" height="11"/></g></svg>
<div class="t" style="left:447.6px;top:1116.5px;font-size:26.3px;color:#141414;font-weight:normal;">k8s_app_name</div>
<svg class="b" style="left:409px;top:1176.7px;" width="22" height="20" viewBox="0 0 22 20"><g fill="#9a9a9a"><rect x="0" y="1" width="14" height="3.4"/><rect x="5.3" y="1" width="3.4" height="17"/><rect x="10" y="7" width="11" height="3"/><rect x="14" y="7" width="3" height="11"/></g></svg>
<div class="t" style="left:447.6px;top:1172.4px;font-size:26.3px;color:#141414;font-weight:normal;">k8s_cluster</div>
<svg class="b" style="left:409px;top:1232.65px;" width="22" height="20" viewBox="0 0 22 20"><g fill="#9a9a9a"><rect x="0" y="1" width="14" height="3.4"/><rect x="5.3" y="1" width="3.4" height="17"/><rect x="10" y="7" width="11" height="3"/><rect x="14" y="7" width="3" height="11"/></g></svg>
<div class="t" style="left:447.6px;top:1228.4px;font-size:26.3px;color:#141414;font-weight:normal;">k8s_cluster_name</div>
<svg class="b" style="left:409px;top:1288.6000000000001px;" width="22" height="20" viewBox="0 0 22 20"><g fill="#9a9a9a"><rect x="0" y="1" width="14" height="3.4"/><rect x="5.3" y="1" width="3.4" height="17"/><rect x="10" y="7" width="11" height="3"/><rect x="14" y="7" width="3" height="11"/></g></svg>
<div class="t" style="left:447.6px;top:1284.3px;font-size:26.3px;color:#141414;font-weight:normal;">k8s_container_name</div>
<svg class="b" style="left:409px;top:1344.5500000000002px;" width="22" height="20" viewBox="0 0 22 20"><g fill="#9a9a9a"><rect x="0" y="1" width="14" height="3.4"/><rect x="5.3" y="1" width="3.4" height="17"/><rect x="10" y="7" width="11" height="3"/><rect x="14" y="7" width="3" height="11"/></g></svg>
<div class="t" style="left:447.6px;top:1340.3px;font-size:26.3px;color:#141414;font-weight:normal;">k8s_deployment_name</div>
<svg class="b" style="left:409px;top:1400.5px;" width="22" height="20" viewBox="0 0 22 20"><g fill="#9a9a9a"><rect x="0" y="1" width="14" height="3.4"/><rect x="5.3" y="1" width="3.4" height="17"/><rect x="10" y="7" width="11" height="3"/><rect x="14" y="7" width="3" height="11"/></g></svg>
<div class="t" style="left:447.6px;top:1396.2px;font-size:26.3px;color:#141414;font-weight:normal;">k8s_namespace_name</div>
<svg class="b" style="left:409px;top:1456.45px;" width="22" height="20" viewBox="0 0 22 20"><g fill="#9a9a9a"><rect x="0" y="1" width="14" height="3.4"/><rect x="5.3" y="1" width="3.4" height="17"/><rect x="10" y="7" width="11" height="3"/><rect x="14" y="7" width="3" height="11"/></g></svg>
<div class="t" style="left:447.6px;top:1452.2px;font-size:26.3px;color:#141414;font-weight:normal;">k8s_node_name</div>
<svg class="b" style="left:409px;top:1512.4px;" width="22" height="20" viewBox="0 0 22 20"><g fill="#9a9a9a"><rect x="0" y="1" width="14" height="3.4"/><rect x="5.3" y="1" width="3.4" height="17"/><rect x="10" y="7" width="11" height="3"/><rect x="14" y="7" width="3" height="11"/></g></svg>
<div class="t" style="left:447.6px;top:1508.1px;font-size:26.3px;color:#141414;font-weight:normal;">k8s_node_uid</div>
<svg class="b" style="left:409px;top:1568.3500000000001px;" width="22" height="20" viewBox="0 0 22 20"><g fill="#9a9a9a"><rect x="0" y="1" width="14" height="3.4"/><rect x="5.3" y="1" width="3.4" height="17"/><rect x="10" y="7" width="11" height="3"/><rect x="14" y="7" width="3" height="11"/></g></svg>
<div class="t" style="left:447.6px;top:1564.1px;font-size:26.3px;color:#141414;font-weight:normal;">k8s_pod_name</div>
<svg class="b" style="left:409px;top:1624.3000000000002px;" width="22" height="20" viewBox="0 0 22 20"><g fill="#9a9a9a"><rect x="0" y="1" width="14" height="3.4"/><rect x="5.3" y="1" width="3.4" height="17"/><rect x="10" y="7" width="11" height="3"/><rect x="14" y="7" width="3" height="11"/></g></svg>
<div class="t" style="left:447.6px;top:1620.0px;font-size:26.3px;color:#141414;font-weight:normal;">k8s_pod_start_time</div>
<svg class="b" style="left:409px;top:1680.25px;" width="22" height="20" viewBox="0 0 22 20"><g fill="#9a9a9a"><rect x="0" y="1" width="14" height="3.4"/><rect x="5.3" y="1" width="3.4" height="17"/><rect x="10" y="7" width="11" height="3"/><rect x="14" y="7" width="3" height="11"/></g></svg>
<div class="t" style="left:447.6px;top:1676.0px;font-size:26.3px;color:#141414;font-weight:normal;">k8s_pod_uid</div>
<div class="b" style="left:900px;top:231px;width:25px;height:59px;background:#3f7994;border-radius:12px;"></div>
<svg class="b" style="left:905px;top:252px;" width="14" height="18" viewBox="0 0 14 18"><path d="M10 2 L4 9 L10 16" fill="none" stroke="#fff" stroke-width="2.6"/></svg>
<div class="b" style="left:925px;top:209px;width:2055px;height:1502px;background:#f8f9fa;border-radius:6px 12px 12px 0;border-top:1.5px solid #d6d9dd;"></div>
<div class="b" style="left:2878px;top:209px;width:2px;height:1502px;background:#d3d7dc;"></div>
<div class="b" style="left:2880px;top:209px;width:100px;height:1500px;background:linear-gradient(to bottom,#f6f7f9,#eef2f4);border-radius:0 12px 12px 0;"></div>
<svg class="b" style="left:2912px;top:235px;" width="36" height="28" viewBox="0 0 36 28"><rect x="1" y="0" width="4" height="27" fill="#161616"/><rect x="31" y="0" width="4" height="27" fill="#161616"/><path d="M7 14 L13 8 L13 12 L23 12 L23 8 L29 14 L23 20 L23 16 L13 16 L13 20 Z" fill="#161616"/></svg>
<div class="t" style="left:2887px;top:297px;width:80px;height:30px;font-size:25.6px;font-weight:bold;color:#161616;transform:rotate(90deg);transform-origin:40px 15px;text-align:center;line-height:30px;">Config</div>
<div class="b" style="left:934px;top:228px;width:850px;height:84px;border:2px solid #d9dadd;border-radius:10px;"></div>
<div class="t" style="left:959.0px;top:241.2px;font-size:21px;color:#6a6a6e;font-weight:normal;">k8s_node_name</div>
<div class="t" style="left:959.0px;top:279.5px;font-size:26px;color:#141414;font-weight:normal;">ip-10-1-51-69.us-east-2.compute.internal</div>
<svg class="b" style="left:1725px;top:263px;" width="20" height="11" viewBox="0 0 20 11"><path d="M0 0 L20 0 L10 11 Z" fill="#5a5a5a"/></svg>
<svg class="b" style="left:1850px;top:238px;" width="48" height="44" viewBox="0 0 48 44"><path d="M3 3 L33 3 L22 17 L22 36 L15 31 L15 17 Z" fill="none" stroke="#161616" stroke-width="4.2" stroke-linejoin="round"/><path d="M35 26 L35 42 M27 34 L43 34" stroke="#161616" stroke-width="4"/></svg>
<div class="b" style="left:1962px;top:236px;width:288px;height:70px;border:2px solid #d9dadd;border-radius:10px;"></div>
<svg class="b" style="left:1999px;top:259px;" width="24" height="24" viewBox="0 0 24 24"><path d="M12 2 L12 22 M2 12 L22 12" stroke="#3f7994" stroke-width="2.6"/></svg>
<div class="t" style="left:2051.0px;top:256.0px;font-size:29px;color:#3f7994;font-weight:normal;">Add Variable</div>
<div class="b" style="left:941px;top:329px;width:1921px;height:127px;background:#faf1dc;border:2px solid #d6a01c;border-radius:9px;"></div>
<div class="t" style="left:961.8px;top:358.0px;font-size:27.2px;color:#141414;font-weight:bold;">Your chart is not up to date</div>
<div class="t" style="left:961.8px;top:399.4px;font-size:28.5px;color:#181818;font-weight:normal;">Chart Configuration / Variables has been updated, but the chart was not updated automatically. Click on the "Apply" button to run the query again</div>
<svg class="b" style="left:2747px;top:477px;" width="23" height="23" viewBox="0 0 23 23"><circle cx="11.5" cy="11.5" r="10" fill="#e9e9ea" stroke="#9a9a9a" stroke-width="1.6"/><path d="M11.5 4 L11.5 11.5 L16 11.5" fill="none" stroke="#777" stroke-width="1.4"/></svg>
<div class="t" style="left:2779.0px;top:479.1px;font-size:22.9px;color:#1e1e1e;font-weight:normal;">10s ago</div>
<svg class="b" style="left:0;top:0" width="2999" height="1719" viewBox="0 0 2999 1719"><line x1="998" y1="1254.6" x2="2375" y2="1254.6" stroke="#e5eaef" stroke-width="1.6"/><line x1="998" y1="1127.2" x2="2375" y2="1127.2" stroke="#e5eaef" stroke-width="1.6"/><line x1="998" y1="999.8" x2="2375" y2="999.8" stroke="#e5eaef" stroke-width="1.6"/><line x1="998" y1="872.3" x2="2375" y2="872.3" stroke="#e5eaef" stroke-width="1.6"/><line x1="998" y1="744.9" x2="2375" y2="744.9" stroke="#e5eaef" stroke-width="1.6"/><line x1="998" y1="617.5" x2="2375" y2="617.5" stroke="#e5eaef" stroke-width="1.6"/><line x1="1144.0" y1="617.5" x2="1144.0" y2="1254.6" stroke="#e5eaef" stroke-width="1.6"/><line x1="1327.6" y1="617.5" x2="1327.6" y2="1254.6" stroke="#e5eaef" stroke-width="1.6"/><line x1="1511.2" y1="617.5" x2="1511.2" y2="1254.6" stroke="#e5eaef" stroke-width="1.6"/><line x1="1694.8" y1="617.5" x2="1694.8" y2="1254.6" stroke="#e5eaef" stroke-width="1.6"/><line x1="1878.4" y1="617.5" x2="1878.4" y2="1254.6" stroke="#e5eaef" stroke-width="1.6"/><line x1="2062.0" y1="617.5" x2="2062.0" y2="1254.6" stroke="#e5eaef" stroke-width="1.6"/><line x1="2245.6" y1="617.5" x2="2245.6" y2="1254.6" stroke="#e5eaef" stroke-width="1.6"/><line x1="998" y1="617.5" x2="998" y2="1254.6" stroke="#e5eaef" stroke-width="1.6"/><line x1="2375" y1="617.5" x2="2375" y2="1254.6" stroke="#e5eaef" stroke-width="1.6"/><path d="M998.0,1251.4 L1007.8,1251.4 L1010.2,1251.4 L1053.3,1251.4 L1055.7,1251.4 L1099.6,1251.4 L1102.0,1251.4 L1144.8,1251.4 L1147.2,1251.4 L1189.8,1251.4 L1192.2,1251.4 L1236.6,1251.4 L1239.0,1251.4 L1282.8,1251.4 L1285.2,1251.4 L1328.6,1251.4 L1331.0,1251.4 L1374.5,1251.4 L1376.9,1251.4 L1420.3,1251.4 L1422.7,1251.4 L1465.8,1251.4 L1468.2,1251.4 L1511.8,1251.4 L1514.2,1251.4 L1557.8,1251.4 L1560.2,1251.4 L1603.5,1251.4 L1605.9,1251.4 L1649.4,1251.4 L1651.8,1251.4 L1694.8,1251.4 L1697.2,1251.4 L1740.3,1251.4 L1742.7,1251.4 L1786.4,1251.4 L1788.8,1251.4 L1831.8,1251.4 L1834.2,1251.4 L1877.8,1251.4 L1880.2,1251.4 L1923.8,1251.4 L1926.2,1251.4 L1969.4,1251.4 L1971.8,1251.4 L2015.5,1251.4 L2017.9,1251.4 L2060.2,1251.4 L2062.6,1251.4 L2106.3,1251.4 L2108.7,1251.4 L2152.8,1251.4 L2155.2,1251.4 L2198.5,1251.4 L2200.9,1251.4 L2244.6,1251.4 L2247.0,1251.4 L2290.8,1251.4 L2293.2,1251.4 L2335.8,1251.4 L2338.2,1251.4 L2371.5,1251.4 L2371.5,1254.6 L2338.2,1254.6 L2335.8,1254.6 L2293.2,1254.6 L2290.8,1254.6 L2247.0,1254.6 L2244.6,1254.6 L2200.9,1254.6 L2198.5,1254.6 L2155.2,1254.6 L2152.8,1254.6 L2108.7,1254.6 L2106.3,1254.6 L2062.6,1254.6 L2060.2,1254.6 L2017.9,1254.6 L2015.5,1254.6 L1971.8,1254.6 L1969.4,1254.6 L1926.2,1254.6 L1923.8,1254.6 L1880.2,1254.6 L1877.8,1254.6 L1834.2,1254.6 L1831.8,1254.6 L1788.8,1254.6 L1786.4,1254.6 L1742.7,1254.6 L1740.3,1254.6 L1697.2,1254.6 L1694.8,1254.6 L1651.8,1254.6 L1649.4,1254.6 L1605.9,1254.6 L1603.5,1254.6 L1560.2,1254.6 L1557.8,1254.6 L1514.2,1254.6 L1511.8,1254.6 L1468.2,1254.6 L1465.8,1254.6 L1422.7,1254.6 L1420.3,1254.6 L1376.9,1254.6 L1374.5,1254.6 L1331.0,1254.6 L1328.6,1254.6 L1285.2,1254.6 L1282.8,1254.6 L1239.0,1254.6 L1236.6,1254.6 L1192.2,1254.6 L1189.8,1254.6 L1147.2,1254.6 L1144.8,1254.6 L1102.0,1254.6 L1099.6,1254.6 L1055.7,1254.6 L1053.3,1254.6 L1010.2,1254.6 L1007.8,1254.6 L998.0,1254.6Z" fill="#9f9bd9"/><path d="M998.0,1249.5 L1007.8,1249.5 L1010.2,1249.5 L1053.3,1249.5 L1055.7,1249.5 L1099.6,1249.5 L1102.0,1249.5 L1144.8,1249.5 L1147.2,1249.5 L1189.8,1249.5 L1192.2,1249.5 L1236.6,1249.5 L1239.0,1249.5 L1282.8,1249.5 L1285.2,1249.5 L1328.6,1249.5 L1331.0,1249.5 L1374.5,1249.5 L1376.9,1249.5 L1420.3,1249.5 L1422.7,1249.5 L1465.8,1249.5 L1468.2,1249.5 L1511.8,1249.5 L1514.2,1249.5 L1557.8,1249.5 L1560.2,1249.5 L1603.5,1249.5 L1605.9,1249.5 L1649.4,1249.5 L1651.8,1249.5 L1694.8,1249.5 L1697.2,1249.5 L1740.3,1249.5 L1742.7,1249.5 L1786.4,1249.5 L1788.8,1249.5 L1831.8,1249.5 L1834.2,1249.5 L1877.8,1249.5 L1880.2,1249.5 L1923.8,1249.5 L1926.2,1249.5 L1969.4,1249.5 L1971.8,1249.5 L2015.5,1249.5 L2017.9,1249.5 L2060.2,1249.5 L2062.6,1249.5 L2106.3,1249.5 L2108.7,1249.5 L2152.8,1249.5 L2155.2,1249.5 L2198.5,1249.5 L2200.9,1249.5 L2244.6,1249.5 L2247.0,1249.5 L2290.8,1249.5 L2293.2,1249.5 L2335.8,1249.5 L2338.2,1249.5 L2371.5,1249.5 L2371.5,1251.4 L2338.2,1251.4 L2335.8,1251.4 L2293.2,1251.4 L2290.8,1251.4 L2247.0,1251.4 L2244.6,1251.4 L2200.9,1251.4 L2198.5,1251.4 L2155.2,1251.4 L2152.8,1251.4 L2108.7,1251.4 L2106.3,1251.4 L2062.6,1251.4 L2060.2,1251.4 L2017.9,1251.4 L2015.5,1251.4 L1971.8,1251.4 L1969.4,1251.4 L1926.2,1251.4 L1923.8,1251.4 L1880.2,1251.4 L1877.8,1251.4 L1834.2,1251.4 L1831.8,1251.4 L1788.8,1251.4 L1786.4,1251.4 L1742.7,1251.4 L1740.3,1251.4 L1697.2,1251.4 L1694.8,1251.4 L1651.8,1251.4 L1649.4,1251.4 L1605.9,1251.4 L1603.5,1251.4 L1560.2,1251.4 L1557.8,1251.4 L1514.2,1251.4 L1511.8,1251.4 L1468.2,1251.4 L1465.8,1251.4 L1422.7,1251.4 L1420.3,1251.4 L1376.9,1251.4 L1374.5,1251.4 L1331.0,1251.4 L1328.6,1251.4 L1285.2,1251.4 L1282.8,1251.4 L1239.0,1251.4 L1236.6,1251.4 L1192.2,1251.4 L1189.8,1251.4 L1147.2,1251.4 L1144.8,1251.4 L1102.0,1251.4 L1099.6,1251.4 L1055.7,1251.4 L1053.3,1251.4 L1010.2,1251.4 L1007.8,1251.4 L998.0,1251.4Z" fill="#e9cf6a"/><path d="M998.0,1246.3 L1007.8,1246.3 L1010.2,1246.3 L1053.3,1246.3 L1055.7,1246.3 L1099.6,1246.3 L1102.0,1246.3 L1144.8,1246.3 L1147.2,1246.3 L1189.8,1246.3 L1192.2,1246.3 L1236.6,1246.3 L1239.0,1246.3 L1282.8,1246.3 L1285.2,1246.3 L1328.6,1246.3 L1331.0,1246.3 L1374.5,1246.3 L1376.9,1246.3 L1420.3,1246.3 L1422.7,1246.3 L1465.8,1246.3 L1468.2,1246.3 L1511.8,1246.3 L1514.2,1246.3 L1557.8,1246.3 L1560.2,1246.3 L1603.5,1246.3 L1605.9,1246.3 L1649.4,1246.3 L1651.8,1246.3 L1694.8,1246.3 L1697.2,1246.3 L1740.3,1246.3 L1742.7,1246.3 L1786.4,1246.3 L1788.8,1246.3 L1831.8,1246.3 L1834.2,1246.3 L1877.8,1246.3 L1880.2,1246.3 L1923.8,1246.3 L1926.2,1246.3 L1969.4,1246.3 L1971.8,1246.3 L2015.5,1246.3 L2017.9,1246.3 L2060.2,1246.3 L2062.6,1246.3 L2106.3,1246.3 L2108.7,1246.3 L2152.8,1246.3 L2155.2,1246.3 L2198.5,1246.3 L2200.9,1246.3 L2244.6,1246.3 L2247.0,1246.3 L2290.8,1246.3 L2293.2,1246.3 L2335.8,1246.3 L2338.2,1246.3 L2371.5,1246.3 L2371.5,1249.5 L2338.2,1249.5 L2335.8,1249.5 L2293.2,1249.5 L2290.8,1249.5 L2247.0,1249.5 L2244.6,1249.5 L2200.9,1249.5 L2198.5,1249.5 L2155.2,1249.5 L2152.8,1249.5 L2108.7,1249.5 L2106.3,1249.5 L2062.6,1249.5 L2060.2,1249.5 L2017.9,1249.5 L2015.5,1249.5 L1971.8,1249.5 L1969.4,1249.5 L1926.2,1249.5 L1923.8,1249.5 L1880.2,1249.5 L1877.8,1249.5 L1834.2,1249.5 L1831.8,1249.5 L1788.8,1249.5 L1786.4,1249.5 L1742.7,1249.5 L1740.3,1249.5 L1697.2,1249.5 L1694.8,1249.5 L1651.8,1249.5 L1649.4,1249.5 L1605.9,1249.5 L1603.5,1249.5 L1560.2,1249.5 L1557.8,1249.5 L1514.2,1249.5 L1511.8,1249.5 L1468.2,1249.5 L1465.8,1249.5 L1422.7,1249.5 L1420.3,1249.5 L1376.9,1249.5 L1374.5,1249.5 L1331.0,1249.5 L1328.6,1249.5 L1285.2,1249.5 L1282.8,1249.5 L1239.0,1249.5 L1236.6,1249.5 L1192.2,1249.5 L1189.8,1249.5 L1147.2,1249.5 L1144.8,1249.5 L1102.0,1249.5 L1099.6,1249.5 L1055.7,1249.5 L1053.3,1249.5 L1010.2,1249.5 L1007.8,1249.5 L998.0,1249.5Z" fill="#7d80d4"/><path d="M998.0,1243.1 L1007.8,1243.1 L1010.2,1243.1 L1053.3,1243.1 L1055.7,1243.1 L1099.6,1243.1 L1102.0,1243.1 L1144.8,1243.1 L1147.2,1243.1 L1189.8,1243.1 L1192.2,1243.1 L1236.6,1243.1 L1239.0,1243.1 L1282.8,1243.1 L1285.2,1243.1 L1328.6,1243.1 L1331.0,1243.1 L1374.5,1243.1 L1376.9,1243.1 L1420.3,1243.1 L1422.7,1243.1 L1465.8,1243.1 L1468.2,1243.1 L1511.8,1243.1 L1514.2,1243.1 L1557.8,1243.1 L1560.2,1243.1 L1603.5,1243.1 L1605.9,1243.1 L1649.4,1243.1 L1651.8,1243.1 L1694.8,1243.1 L1697.2,1243.1 L1740.3,1243.1 L1742.7,1243.1 L1786.4,1243.1 L1788.8,1243.1 L1831.8,1243.1 L1834.2,1243.1 L1877.8,1243.1 L1880.2,1243.1 L1923.8,1243.1 L1926.2,1243.1 L1969.4,1243.1 L1971.8,1243.1 L2015.5,1243.1 L2017.9,1243.1 L2060.2,1243.1 L2062.6,1243.1 L2106.3,1243.1 L2108.7,1243.1 L2152.8,1243.1 L2155.2,1243.1 L2198.5,1243.1 L2200.9,1243.1 L2244.6,1243.1 L2247.0,1243.1 L2290.8,1243.1 L2293.2,1243.1 L2335.8,1243.1 L2338.2,1243.1 L2371.5,1243.1 L2371.5,1246.3 L2338.2,1246.3 L2335.8,1246.3 L2293.2,1246.3 L2290.8,1246.3 L2247.0,1246.3 L2244.6,1246.3 L2200.9,1246.3 L2198.5,1246.3 L2155.2,1246.3 L2152.8,1246.3 L2108.7,1246.3 L2106.3,1246.3 L2062.6,1246.3 L2060.2,1246.3 L2017.9,1246.3 L2015.5,1246.3 L1971.8,1246.3 L1969.4,1246.3 L1926.2,1246.3 L1923.8,1246.3 L1880.2,1246.3 L1877.8,1246.3 L1834.2,1246.3 L1831.8,1246.3 L1788.8,1246.3 L1786.4,1246.3 L1742.7,1246.3 L1740.3,1246.3 L1697.2,1246.3 L1694.8,1246.3 L1651.8,1246.3 L1649.4,1246.3 L1605.9,1246.3 L1603.5,1246.3 L1560.2,1246.3 L1557.8,1246.3 L1514.2,1246.3 L1511.8,1246.3 L1468.2,1246.3 L1465.8,1246.3 L1422.7,1246.3 L1420.3,1246.3 L1376.9,1246.3 L1374.5,1246.3 L1331.0,1246.3 L1328.6,1246.3 L1285.2,1246.3 L1282.8,1246.3 L1239.0,1246.3 L1236.6,1246.3 L1192.2,1246.3 L1189.8,1246.3 L1147.2,1246.3 L1144.8,1246.3 L1102.0,1246.3 L1099.6,1246.3 L1055.7,1246.3 L1053.3,1246.3 L1010.2,1246.3 L1007.8,1246.3 L998.0,1246.3Z" fill="#5b62c7"/><path d="M998.0,1217.6 L1007.8,1217.6 L1010.2,1217.6 L1053.3,1217.6 L1055.7,1213.8 L1099.6,1213.8 L1102.0,1188.3 L1144.8,1188.3 L1147.2,1217.6 L1189.8,1217.6 L1192.2,1207.5 L1236.6,1207.5 L1239.0,1217.6 L1282.8,1217.6 L1285.2,1217.6 L1328.6,1217.6 L1331.0,1202.4 L1374.5,1202.4 L1376.9,1217.6 L1420.3,1217.6 L1422.7,1184.5 L1465.8,1184.5 L1468.2,1224.0 L1511.8,1224.0 L1514.2,1221.5 L1557.8,1221.5 L1560.2,1224.0 L1603.5,1224.0 L1605.9,1171.8 L1649.4,1171.8 L1651.8,1215.1 L1694.8,1215.1 L1697.2,1215.1 L1740.3,1215.1 L1742.7,1212.6 L1786.4,1212.6 L1788.8,1176.9 L1831.8,1176.9 L1834.2,1218.9 L1877.8,1218.9 L1880.2,1215.1 L1923.8,1215.1 L1926.2,1216.4 L1969.4,1216.4 L1971.8,1194.7 L2015.5,1194.7 L2017.9,1221.5 L2060.2,1221.5 L2062.6,1216.4 L2106.3,1216.4 L2108.7,1217.6 L2152.8,1217.6 L2155.2,1204.9 L2198.5,1204.9 L2200.9,1213.8 L2244.6,1213.8 L2247.0,1217.6 L2290.8,1217.6 L2293.2,1208.7 L2335.8,1208.7 L2338.2,1194.7 L2371.5,1194.7 L2371.5,1243.1 L2338.2,1243.1 L2335.8,1243.1 L2293.2,1243.1 L2290.8,1243.1 L2247.0,1243.1 L2244.6,1243.1 L2200.9,1243.1 L2198.5,1243.1 L2155.2,1243.1 L2152.8,1243.1 L2108.7,1243.1 L2106.3,1243.1 L2062.6,1243.1 L2060.2,1243.1 L2017.9,1243.1 L2015.5,1243.1 L1971.8,1243.1 L1969.4,1243.1 L1926.2,1243.1 L1923.8,1243.1 L1880.2,1243.1 L1877.8,1243.1 L1834.2,1243.1 L1831.8,1243.1 L1788.8,1243.1 L1786.4,1243.1 L1742.7,1243.1 L1740.3,1243.1 L1697.2,1243.1 L1694.8,1243.1 L1651.8,1243.1 L1649.4,1243.1 L1605.9,1243.1 L1603.5,1243.1 L1560.2,1243.1 L1557.8,1243.1 L1514.2,1243.1 L1511.8,1243.1 L1468.2,1243.1 L1465.8,1243.1 L1422.7,1243.1 L1420.3,1243.1 L1376.9,1243.1 L1374.5,1243.1 L1331.0,1243.1 L1328.6,1243.1 L1285.2,1243.1 L1282.8,1243.1 L1239.0,1243.1 L1236.6,1243.1 L1192.2,1243.1 L1189.8,1243.1 L1147.2,1243.1 L1144.8,1243.1 L1102.0,1243.1 L1099.6,1243.1 L1055.7,1243.1 L1053.3,1243.1 L1010.2,1243.1 L1007.8,1243.1 L998.0,1243.1Z" fill="#a38ad3"/><path d="M998.0,1211.3 L1007.8,1211.3 L1010.2,1211.3 L1053.3,1211.3 L1055.7,1207.5 L1099.6,1207.5 L1102.0,1183.2 L1144.8,1183.2 L1147.2,1212.6 L1189.8,1212.6 L1192.2,1202.4 L1236.6,1202.4 L1239.0,1212.6 L1282.8,1212.6 L1285.2,1212.6 L1328.6,1212.6 L1331.0,1197.3 L1374.5,1197.3 L1376.9,1211.3 L1420.3,1211.3 L1422.7,1178.1 L1465.8,1178.1 L1468.2,1218.9 L1511.8,1218.9 L1514.2,1215.1 L1557.8,1215.1 L1560.2,1218.9 L1603.5,1218.9 L1605.9,1166.7 L1649.4,1166.7 L1651.8,1202.4 L1694.8,1202.4 L1697.2,1204.9 L1740.3,1204.9 L1742.7,1206.2 L1786.4,1206.2 L1788.8,1171.8 L1831.8,1171.8 L1834.2,1202.4 L1877.8,1202.4 L1880.2,1208.7 L1923.8,1208.7 L1926.2,1211.3 L1969.4,1211.3 L1971.8,1188.3 L2015.5,1188.3 L2017.9,1213.8 L2060.2,1213.8 L2062.6,1212.6 L2106.3,1212.6 L2108.7,1215.1 L2152.8,1215.1 L2155.2,1201.1 L2198.5,1201.1 L2200.9,1211.3 L2244.6,1211.3 L2247.0,1215.1 L2290.8,1215.1 L2293.2,1204.9 L2335.8,1204.9 L2338.2,1190.9 L2371.5,1190.9 L2371.5,1194.7 L2338.2,1194.7 L2335.8,1208.7 L2293.2,1208.7 L2290.8,1217.6 L2247.0,1217.6 L2244.6,1213.8 L2200.9,1213.8 L2198.5,1204.9 L2155.2,1204.9 L2152.8,1217.6 L2108.7,1217.6 L2106.3,1216.4 L2062.6,1216.4 L2060.2,1221.5 L2017.9,1221.5 L2015.5,1194.7 L1971.8,1194.7 L1969.4,1216.4 L1926.2,1216.4 L1923.8,1215.1 L1880.2,1215.1 L1877.8,1218.9 L1834.2,1218.9 L1831.8,1176.9 L1788.8,1176.9 L1786.4,1212.6 L1742.7,1212.6 L1740.3,1215.1 L1697.2,1215.1 L1694.8,1215.1 L1651.8,1215.1 L1649.4,1171.8 L1605.9,1171.8 L1603.5,1224.0 L1560.2,1224.0 L1557.8,1221.5 L1514.2,1221.5 L1511.8,1224.0 L1468.2,1224.0 L1465.8,1184.5 L1422.7,1184.5 L1420.3,1217.6 L1376.9,1217.6 L1374.5,1202.4 L1331.0,1202.4 L1328.6,1217.6 L1285.2,1217.6 L1282.8,1217.6 L1239.0,1217.6 L1236.6,1207.5 L1192.2,1207.5 L1189.8,1217.6 L1147.2,1217.6 L1144.8,1188.3 L1102.0,1188.3 L1099.6,1213.8 L1055.7,1213.8 L1053.3,1217.6 L1010.2,1217.6 L1007.8,1217.6 L998.0,1217.6Z" fill="#86ccb9"/><path d="M998.0,871.1 L1007.8,871.1 L1010.2,867.2 L1053.3,867.2 L1055.7,862.1 L1099.6,862.1 L1102.0,837.9 L1144.8,837.9 L1147.2,783.1 L1189.8,783.1 L1192.2,1089.0 L1236.6,1089.0 L1239.0,1100.4 L1282.8,1100.4 L1285.2,1100.4 L1328.6,1100.4 L1331.0,1083.9 L1374.5,1083.9 L1376.9,1097.9 L1420.3,1097.9 L1422.7,1066.0 L1465.8,1066.0 L1468.2,1108.1 L1511.8,1108.1 L1514.2,1103.0 L1557.8,1103.0 L1560.2,1108.1 L1603.5,1108.1 L1605.9,1089.0 L1649.4,1089.0 L1651.8,1128.5 L1694.8,1128.5 L1697.2,1133.6 L1740.3,1133.6 L1742.7,1129.7 L1786.4,1129.7 L1788.8,1095.3 L1831.8,1095.3 L1834.2,1127.2 L1877.8,1127.2 L1880.2,1133.6 L1923.8,1133.6 L1926.2,1136.1 L1969.4,1136.1 L1971.8,1113.2 L2015.5,1113.2 L2017.9,1139.9 L2060.2,1139.9 L2062.6,1207.5 L2106.3,1207.5 L2108.7,1211.3 L2152.8,1211.3 L2155.2,1197.3 L2198.5,1197.3 L2200.9,1207.5 L2244.6,1207.5 L2247.0,1210.0 L2290.8,1210.0 L2293.2,1201.1 L2335.8,1201.1 L2338.2,1187.1 L2371.5,1187.1 L2371.5,1190.9 L2338.2,1190.9 L2335.8,1204.9 L2293.2,1204.9 L2290.8,1215.1 L2247.0,1215.1 L2244.6,1211.3 L2200.9,1211.3 L2198.5,1201.1 L2155.2,1201.1 L2152.8,1215.1 L2108.7,1215.1 L2106.3,1212.6 L2062.6,1212.6 L2060.2,1213.8 L2017.9,1213.8 L2015.5,1188.3 L1971.8,1188.3 L1969.4,1211.3 L1926.2,1211.3 L1923.8,1208.7 L1880.2,1208.7 L1877.8,1202.4 L1834.2,1202.4 L1831.8,1171.8 L1788.8,1171.8 L1786.4,1206.2 L1742.7,1206.2 L1740.3,1204.9 L1697.2,1204.9 L1694.8,1202.4 L1651.8,1202.4 L1649.4,1166.7 L1605.9,1166.7 L1603.5,1218.9 L1560.2,1218.9 L1557.8,1215.1 L1514.2,1215.1 L1511.8,1218.9 L1468.2,1218.9 L1465.8,1178.1 L1422.7,1178.1 L1420.3,1211.3 L1376.9,1211.3 L1374.5,1197.3 L1331.0,1197.3 L1328.6,1212.6 L1285.2,1212.6 L1282.8,1212.6 L1239.0,1212.6 L1236.6,1202.4 L1192.2,1202.4 L1189.8,1212.6 L1147.2,1212.6 L1144.8,1183.2 L1102.0,1183.2 L1099.6,1207.5 L1055.7,1207.5 L1053.3,1211.3 L1010.2,1211.3 L1007.8,1211.3 L998.0,1211.3Z" fill="#96d396"/><path d="M998.0,869.8 L1007.8,869.8 L1010.2,865.9 L1053.3,865.9 L1055.7,860.7 L1099.6,860.7 L1102.0,836.2 L1144.8,836.2 L1147.2,781.2 L1189.8,781.2 L1192.2,1087.2 L1236.6,1087.2 L1239.0,1098.9 L1282.8,1098.9 L1285.2,1099.1 L1328.6,1099.1 L1331.0,1082.5 L1374.5,1082.5 L1376.9,1096.7 L1420.3,1096.7 L1422.7,1064.9 L1465.8,1064.9 L1468.2,1106.8 L1511.8,1106.8 L1514.2,1101.6 L1557.8,1101.6 L1560.2,1106.4 L1603.5,1106.4 L1605.9,1087.2 L1649.4,1087.2 L1651.8,1125.6 L1694.8,1125.6 L1697.2,1131.9 L1740.3,1131.9 L1742.7,1128.4 L1786.4,1128.4 L1788.8,1094.1 L1831.8,1094.1 L1834.2,1125.8 L1877.8,1125.8 L1880.2,1132.2 L1923.8,1132.2 L1926.2,1134.8 L1969.4,1134.8 L1971.8,1111.7 L2015.5,1111.7 L2017.9,1138.3 L2060.2,1138.3 L2062.6,1205.6 L2106.3,1205.6 L2108.7,1209.5 L2152.8,1209.5 L2155.2,1195.8 L2198.5,1195.8 L2200.9,1206.1 L2244.6,1206.1 L2247.0,1208.9 L2290.8,1208.9 L2293.2,1199.9 L2335.8,1199.9 L2338.2,1185.8 L2371.5,1185.8 L2371.5,1187.1 L2338.2,1187.1 L2335.8,1201.1 L2293.2,1201.1 L2290.8,1210.0 L2247.0,1210.0 L2244.6,1207.5 L2200.9,1207.5 L2198.5,1197.3 L2155.2,1197.3 L2152.8,1211.3 L2108.7,1211.3 L2106.3,1207.5 L2062.6,1207.5 L2060.2,1139.9 L2017.9,1139.9 L2015.5,1113.2 L1971.8,1113.2 L1969.4,1136.1 L1926.2,1136.1 L1923.8,1133.6 L1880.2,1133.6 L1877.8,1127.2 L1834.2,1127.2 L1831.8,1095.3 L1788.8,1095.3 L1786.4,1129.7 L1742.7,1129.7 L1740.3,1133.6 L1697.2,1133.6 L1694.8,1128.5 L1651.8,1128.5 L1649.4,1089.0 L1605.9,1089.0 L1603.5,1108.1 L1560.2,1108.1 L1557.8,1103.0 L1514.2,1103.0 L1511.8,1108.1 L1468.2,1108.1 L1465.8,1066.0 L1422.7,1066.0 L1420.3,1097.9 L1376.9,1097.9 L1374.5,1083.9 L1331.0,1083.9 L1328.6,1100.4 L1285.2,1100.4 L1282.8,1100.4 L1239.0,1100.4 L1236.6,1089.0 L1192.2,1089.0 L1189.8,783.1 L1147.2,783.1 L1144.8,837.9 L1102.0,837.9 L1099.6,862.1 L1055.7,862.1 L1053.3,867.2 L1010.2,867.2 L1007.8,871.1 L998.0,871.1Z" fill="#5aa9f5"/><path d="M998.0,862.4 L1007.8,862.4 L1010.2,858.6 L1053.3,858.6 L1055.7,852.2 L1099.6,852.2 L1102.0,826.5 L1144.8,826.5 L1147.2,770.4 L1189.8,770.4 L1192.2,1077.5 L1236.6,1077.5 L1239.0,1090.5 L1282.8,1090.5 L1285.2,1091.5 L1328.6,1091.5 L1331.0,1074.7 L1374.5,1074.7 L1376.9,1090.2 L1420.3,1090.2 L1422.7,1058.4 L1465.8,1058.4 L1468.2,1099.7 L1511.8,1099.7 L1514.2,1093.8 L1557.8,1093.8 L1560.2,1097.1 L1603.5,1097.1 L1605.9,1077.0 L1649.4,1077.0 L1651.8,1109.6 L1694.8,1109.6 L1697.2,1122.6 L1740.3,1122.6 L1742.7,1121.1 L1786.4,1121.1 L1788.8,1087.4 L1831.8,1087.4 L1834.2,1118.0 L1877.8,1118.0 L1880.2,1124.6 L1923.8,1124.6 L1926.2,1127.7 L1969.4,1127.7 L1971.8,1103.5 L2015.5,1103.5 L2017.9,1129.2 L2060.2,1129.2 L2062.6,1195.0 L2106.3,1195.0 L2108.7,1199.6 L2152.8,1199.6 L2155.2,1187.3 L2198.5,1187.3 L2200.9,1198.5 L2244.6,1198.5 L2247.0,1202.4 L2290.8,1202.4 L2293.2,1193.2 L2335.8,1193.2 L2338.2,1178.7 L2371.5,1178.7 L2371.5,1185.8 L2338.2,1185.8 L2335.8,1199.9 L2293.2,1199.9 L2290.8,1208.9 L2247.0,1208.9 L2244.6,1206.1 L2200.9,1206.1 L2198.5,1195.8 L2155.2,1195.8 L2152.8,1209.5 L2108.7,1209.5 L2106.3,1205.6 L2062.6,1205.6 L2060.2,1138.3 L2017.9,1138.3 L2015.5,1111.7 L1971.8,1111.7 L1969.4,1134.8 L1926.2,1134.8 L1923.8,1132.2 L1880.2,1132.2 L1877.8,1125.8 L1834.2,1125.8 L1831.8,1094.1 L1788.8,1094.1 L1786.4,1128.4 L1742.7,1128.4 L1740.3,1131.9 L1697.2,1131.9 L1694.8,1125.6 L1651.8,1125.6 L1649.4,1087.2 L1605.9,1087.2 L1603.5,1106.4 L1560.2,1106.4 L1557.8,1101.6 L1514.2,1101.6 L1511.8,1106.8 L1468.2,1106.8 L1465.8,1064.9 L1422.7,1064.9 L1420.3,1096.7 L1376.9,1096.7 L1374.5,1082.5 L1331.0,1082.5 L1328.6,1099.1 L1285.2,1099.1 L1282.8,1098.9 L1239.0,1098.9 L1236.6,1087.2 L1192.2,1087.2 L1189.8,781.2 L1147.2,781.2 L1144.8,836.2 L1102.0,836.2 L1099.6,860.7 L1055.7,860.7 L1053.3,865.9 L1010.2,865.9 L1007.8,869.8 L998.0,869.8Z" fill="#cfe08e"/><path d="M998.0,856.3 L1007.8,856.3 L1010.2,852.5 L1053.3,852.5 L1055.7,845.3 L1099.6,845.3 L1102.0,818.4 L1144.8,818.4 L1147.2,761.5 L1189.8,761.5 L1192.2,1069.5 L1236.6,1069.5 L1239.0,1083.5 L1282.8,1083.5 L1285.2,1085.3 L1328.6,1085.3 L1331.0,1068.3 L1374.5,1068.3 L1376.9,1084.9 L1420.3,1084.9 L1422.7,1053.0 L1465.8,1053.0 L1468.2,1093.8 L1511.8,1093.8 L1514.2,1087.4 L1557.8,1087.4 L1560.2,1089.4 L1603.5,1089.4 L1605.9,1068.6 L1649.4,1068.6 L1651.8,1096.4 L1694.8,1096.4 L1697.2,1114.9 L1740.3,1114.9 L1742.7,1115.0 L1786.4,1115.0 L1788.8,1081.9 L1831.8,1081.9 L1834.2,1111.6 L1877.8,1111.6 L1880.2,1118.4 L1923.8,1118.4 L1926.2,1121.8 L1969.4,1121.8 L1971.8,1096.7 L2015.5,1096.7 L2017.9,1121.7 L2060.2,1121.7 L2062.6,1186.2 L2106.3,1186.2 L2108.7,1191.3 L2152.8,1191.3 L2155.2,1180.4 L2198.5,1180.4 L2200.9,1192.3 L2244.6,1192.3 L2247.0,1197.0 L2290.8,1197.0 L2293.2,1187.7 L2335.8,1187.7 L2338.2,1172.8 L2371.5,1172.8 L2371.5,1178.7 L2338.2,1178.7 L2335.8,1193.2 L2293.2,1193.2 L2290.8,1202.4 L2247.0,1202.4 L2244.6,1198.5 L2200.9,1198.5 L2198.5,1187.3 L2155.2,1187.3 L2152.8,1199.6 L2108.7,1199.6 L2106.3,1195.0 L2062.6,1195.0 L2060.2,1129.2 L2017.9,1129.2 L2015.5,1103.5 L1971.8,1103.5 L1969.4,1127.7 L1926.2,1127.7 L1923.8,1124.6 L1880.2,1124.6 L1877.8,1118.0 L1834.2,1118.0 L1831.8,1087.4 L1788.8,1087.4 L1786.4,1121.1 L1742.7,1121.1 L1740.3,1122.6 L1697.2,1122.6 L1694.8,1109.6 L1651.8,1109.6 L1649.4,1077.0 L1605.9,1077.0 L1603.5,1097.1 L1560.2,1097.1 L1557.8,1093.8 L1514.2,1093.8 L1511.8,1099.7 L1468.2,1099.7 L1465.8,1058.4 L1422.7,1058.4 L1420.3,1090.2 L1376.9,1090.2 L1374.5,1074.7 L1331.0,1074.7 L1328.6,1091.5 L1285.2,1091.5 L1282.8,1090.5 L1239.0,1090.5 L1236.6,1077.5 L1192.2,1077.5 L1189.8,770.4 L1147.2,770.4 L1144.8,826.5 L1102.0,826.5 L1099.6,852.2 L1055.7,852.2 L1053.3,858.6 L1010.2,858.6 L1007.8,862.4 L998.0,862.4Z" fill="#82d6e6"/><path d="M998.0,855.0 L1007.8,855.0 L1010.2,851.2 L1053.3,851.2 L1055.7,843.8 L1099.6,843.8 L1102.0,816.7 L1144.8,816.7 L1147.2,759.6 L1189.8,759.6 L1192.2,1067.7 L1236.6,1067.7 L1239.0,1082.0 L1282.8,1082.0 L1285.2,1083.9 L1328.6,1083.9 L1331.0,1066.9 L1374.5,1066.9 L1376.9,1083.7 L1420.3,1083.7 L1422.7,1051.9 L1465.8,1051.9 L1468.2,1092.5 L1511.8,1092.5 L1514.2,1086.0 L1557.8,1086.0 L1560.2,1087.8 L1603.5,1087.8 L1605.9,1066.8 L1649.4,1066.8 L1651.8,1093.6 L1694.8,1093.6 L1697.2,1113.3 L1740.3,1113.3 L1742.7,1113.7 L1786.4,1113.7 L1788.8,1080.7 L1831.8,1080.7 L1834.2,1110.2 L1877.8,1110.2 L1880.2,1117.1 L1923.8,1117.1 L1926.2,1120.5 L1969.4,1120.5 L1971.8,1095.2 L2015.5,1095.2 L2017.9,1120.1 L2060.2,1120.1 L2062.6,1184.4 L2106.3,1184.4 L2108.7,1189.6 L2152.8,1189.6 L2155.2,1178.9 L2198.5,1178.9 L2200.9,1191.0 L2244.6,1191.0 L2247.0,1195.9 L2290.8,1195.9 L2293.2,1186.5 L2335.8,1186.5 L2338.2,1171.5 L2371.5,1171.5 L2371.5,1172.8 L2338.2,1172.8 L2335.8,1187.7 L2293.2,1187.7 L2290.8,1197.0 L2247.0,1197.0 L2244.6,1192.3 L2200.9,1192.3 L2198.5,1180.4 L2155.2,1180.4 L2152.8,1191.3 L2108.7,1191.3 L2106.3,1186.2 L2062.6,1186.2 L2060.2,1121.7 L2017.9,1121.7 L2015.5,1096.7 L1971.8,1096.7 L1969.4,1121.8 L1926.2,1121.8 L1923.8,1118.4 L1880.2,1118.4 L1877.8,1111.6 L1834.2,1111.6 L1831.8,1081.9 L1788.8,1081.9 L1786.4,1115.0 L1742.7,1115.0 L1740.3,1114.9 L1697.2,1114.9 L1694.8,1096.4 L1651.8,1096.4 L1649.4,1068.6 L1605.9,1068.6 L1603.5,1089.4 L1560.2,1089.4 L1557.8,1087.4 L1514.2,1087.4 L1511.8,1093.8 L1468.2,1093.8 L1465.8,1053.0 L1422.7,1053.0 L1420.3,1084.9 L1376.9,1084.9 L1374.5,1068.3 L1331.0,1068.3 L1328.6,1085.3 L1285.2,1085.3 L1282.8,1083.5 L1239.0,1083.5 L1236.6,1069.5 L1192.2,1069.5 L1189.8,761.5 L1147.2,761.5 L1144.8,818.4 L1102.0,818.4 L1099.6,845.3 L1055.7,845.3 L1053.3,852.5 L1010.2,852.5 L1007.8,856.3 L998.0,856.3Z" fill="#4ec4dc"/><path d="M998.0,848.5 L1007.8,848.5 L1010.2,844.7 L1053.3,844.7 L1055.7,836.3 L1099.6,836.3 L1102.0,808.1 L1144.8,808.1 L1147.2,750.0 L1189.8,750.0 L1192.2,1059.1 L1236.6,1059.1 L1239.0,1074.6 L1282.8,1074.6 L1285.2,1077.2 L1328.6,1077.2 L1331.0,1060.0 L1374.5,1060.0 L1376.9,1078.0 L1420.3,1078.0 L1422.7,1046.1 L1465.8,1046.1 L1468.2,1086.2 L1511.8,1086.2 L1514.2,1079.1 L1557.8,1079.1 L1560.2,1079.6 L1603.5,1079.6 L1605.9,1057.8 L1649.4,1057.8 L1651.8,1079.4 L1694.8,1079.4 L1697.2,1105.1 L1740.3,1105.1 L1742.7,1107.2 L1786.4,1107.2 L1788.8,1074.8 L1831.8,1074.8 L1834.2,1103.3 L1877.8,1103.3 L1880.2,1110.4 L1923.8,1110.4 L1926.2,1114.2 L1969.4,1114.2 L1971.8,1088.0 L2015.5,1088.0 L2017.9,1112.1 L2060.2,1112.1 L2062.6,1175.0 L2106.3,1175.0 L2108.7,1180.8 L2152.8,1180.8 L2155.2,1171.4 L2198.5,1171.4 L2200.9,1184.3 L2244.6,1184.3 L2247.0,1190.1 L2290.8,1190.1 L2293.2,1180.5 L2335.8,1180.5 L2338.2,1165.2 L2371.5,1165.2 L2371.5,1171.5 L2338.2,1171.5 L2335.8,1186.5 L2293.2,1186.5 L2290.8,1195.9 L2247.0,1195.9 L2244.6,1191.0 L2200.9,1191.0 L2198.5,1178.9 L2155.2,1178.9 L2152.8,1189.6 L2108.7,1189.6 L2106.3,1184.4 L2062.6,1184.4 L2060.2,1120.1 L2017.9,1120.1 L2015.5,1095.2 L1971.8,1095.2 L1969.4,1120.5 L1926.2,1120.5 L1923.8,1117.1 L1880.2,1117.1 L1877.8,1110.2 L1834.2,1110.2 L1831.8,1080.7 L1788.8,1080.7 L1786.4,1113.7 L1742.7,1113.7 L1740.3,1113.3 L1697.2,1113.3 L1694.8,1093.6 L1651.8,1093.6 L1649.4,1066.8 L1605.9,1066.8 L1603.5,1087.8 L1560.2,1087.8 L1557.8,1086.0 L1514.2,1086.0 L1511.8,1092.5 L1468.2,1092.5 L1465.8,1051.9 L1422.7,1051.9 L1420.3,1083.7 L1376.9,1083.7 L1374.5,1066.9 L1331.0,1066.9 L1328.6,1083.9 L1285.2,1083.9 L1282.8,1082.0 L1239.0,1082.0 L1236.6,1067.7 L1192.2,1067.7 L1189.8,759.6 L1147.2,759.6 L1144.8,816.7 L1102.0,816.7 L1099.6,843.8 L1055.7,843.8 L1053.3,851.2 L1010.2,851.2 L1007.8,855.0 L998.0,855.0Z" fill="#e7d98c"/><path d="M998.0,840.7 L1007.8,840.7 L1010.2,836.9 L1053.3,836.9 L1055.7,827.4 L1099.6,827.4 L1102.0,797.8 L1144.8,797.8 L1147.2,738.5 L1189.8,738.5 L1192.2,1048.8 L1236.6,1048.8 L1239.0,1065.6 L1282.8,1065.6 L1285.2,1069.2 L1328.6,1069.2 L1331.0,1051.7 L1374.5,1051.7 L1376.9,1071.1 L1420.3,1071.1 L1422.7,1039.3 L1465.8,1039.3 L1468.2,1078.6 L1511.8,1078.6 L1514.2,1070.9 L1557.8,1070.9 L1560.2,1069.7 L1603.5,1069.7 L1605.9,1047.0 L1649.4,1047.0 L1651.8,1062.5 L1694.8,1062.5 L1697.2,1095.2 L1740.3,1095.2 L1742.7,1099.4 L1786.4,1099.4 L1788.8,1067.7 L1831.8,1067.7 L1834.2,1095.1 L1877.8,1095.1 L1880.2,1102.3 L1923.8,1102.3 L1926.2,1106.7 L1969.4,1106.7 L1971.8,1079.3 L2015.5,1079.3 L2017.9,1102.5 L2060.2,1102.5 L2062.6,1163.7 L2106.3,1163.7 L2108.7,1170.2 L2152.8,1170.2 L2155.2,1162.5 L2198.5,1162.5 L2200.9,1176.2 L2244.6,1176.2 L2247.0,1183.2 L2290.8,1183.2 L2293.2,1173.4 L2335.8,1173.4 L2338.2,1157.6 L2371.5,1157.6 L2371.5,1165.2 L2338.2,1165.2 L2335.8,1180.5 L2293.2,1180.5 L2290.8,1190.1 L2247.0,1190.1 L2244.6,1184.3 L2200.9,1184.3 L2198.5,1171.4 L2155.2,1171.4 L2152.8,1180.8 L2108.7,1180.8 L2106.3,1175.0 L2062.6,1175.0 L2060.2,1112.1 L2017.9,1112.1 L2015.5,1088.0 L1971.8,1088.0 L1969.4,1114.2 L1926.2,1114.2 L1923.8,1110.4 L1880.2,1110.4 L1877.8,1103.3 L1834.2,1103.3 L1831.8,1074.8 L1788.8,1074.8 L1786.4,1107.2 L1742.7,1107.2 L1740.3,1105.1 L1697.2,1105.1 L1694.8,1079.4 L1651.8,1079.4 L1649.4,1057.8 L1605.9,1057.8 L1603.5,1079.6 L1560.2,1079.6 L1557.8,1079.1 L1514.2,1079.1 L1511.8,1086.2 L1468.2,1086.2 L1465.8,1046.1 L1422.7,1046.1 L1420.3,1078.0 L1376.9,1078.0 L1374.5,1060.0 L1331.0,1060.0 L1328.6,1077.2 L1285.2,1077.2 L1282.8,1074.6 L1239.0,1074.6 L1236.6,1059.1 L1192.2,1059.1 L1189.8,750.0 L1147.2,750.0 L1144.8,808.1 L1102.0,808.1 L1099.6,836.3 L1055.7,836.3 L1053.3,844.7 L1010.2,844.7 L1007.8,848.5 L998.0,848.5Z" fill="#a5d9a2"/><path d="M998.0,839.4 L1007.8,839.4 L1010.2,835.6 L1053.3,835.6 L1055.7,825.9 L1099.6,825.9 L1102.0,796.1 L1144.8,796.1 L1147.2,736.6 L1189.8,736.6 L1192.2,1047.1 L1236.6,1047.1 L1239.0,1064.1 L1282.8,1064.1 L1285.2,1067.9 L1328.6,1067.9 L1331.0,1050.4 L1374.5,1050.4 L1376.9,1070.0 L1420.3,1070.0 L1422.7,1038.1 L1465.8,1038.1 L1468.2,1077.4 L1511.8,1077.4 L1514.2,1069.5 L1557.8,1069.5 L1560.2,1068.1 L1603.5,1068.1 L1605.9,1045.2 L1649.4,1045.2 L1651.8,1059.6 L1694.8,1059.6 L1697.2,1093.6 L1740.3,1093.6 L1742.7,1098.1 L1786.4,1098.1 L1788.8,1066.5 L1831.8,1066.5 L1834.2,1093.7 L1877.8,1093.7 L1880.2,1101.0 L1923.8,1101.0 L1926.2,1105.4 L1969.4,1105.4 L1971.8,1077.8 L2015.5,1077.8 L2017.9,1100.9 L2060.2,1100.9 L2062.6,1161.9 L2106.3,1161.9 L2108.7,1168.5 L2152.8,1168.5 L2155.2,1161.0 L2198.5,1161.0 L2200.9,1174.9 L2244.6,1174.9 L2247.0,1182.1 L2290.8,1182.1 L2293.2,1172.2 L2335.8,1172.2 L2338.2,1156.4 L2371.5,1156.4 L2371.5,1157.6 L2338.2,1157.6 L2335.8,1173.4 L2293.2,1173.4 L2290.8,1183.2 L2247.0,1183.2 L2244.6,1176.2 L2200.9,1176.2 L2198.5,1162.5 L2155.2,1162.5 L2152.8,1170.2 L2108.7,1170.2 L2106.3,1163.7 L2062.6,1163.7 L2060.2,1102.5 L2017.9,1102.5 L2015.5,1079.3 L1971.8,1079.3 L1969.4,1106.7 L1926.2,1106.7 L1923.8,1102.3 L1880.2,1102.3 L1877.8,1095.1 L1834.2,1095.1 L1831.8,1067.7 L1788.8,1067.7 L1786.4,1099.4 L1742.7,1099.4 L1740.3,1095.2 L1697.2,1095.2 L1694.8,1062.5 L1651.8,1062.5 L1649.4,1047.0 L1605.9,1047.0 L1603.5,1069.7 L1560.2,1069.7 L1557.8,1070.9 L1514.2,1070.9 L1511.8,1078.6 L1468.2,1078.6 L1465.8,1039.3 L1422.7,1039.3 L1420.3,1071.1 L1376.9,1071.1 L1374.5,1051.7 L1331.0,1051.7 L1328.6,1069.2 L1285.2,1069.2 L1282.8,1065.6 L1239.0,1065.6 L1236.6,1048.8 L1192.2,1048.8 L1189.8,738.5 L1147.2,738.5 L1144.8,797.8 L1102.0,797.8 L1099.6,827.4 L1055.7,827.4 L1053.3,836.9 L1010.2,836.9 L1007.8,840.7 L998.0,840.7Z" fill="#5dba6a"/><path d="M998.0,833.8 L1007.8,833.8 L1010.2,830.0 L1053.3,830.0 L1055.7,819.4 L1099.6,819.4 L1102.0,788.6 L1144.8,788.6 L1147.2,728.4 L1189.8,728.4 L1192.2,1039.6 L1236.6,1039.6 L1239.0,1057.7 L1282.8,1057.7 L1285.2,1062.1 L1328.6,1062.1 L1331.0,1044.4 L1374.5,1044.4 L1376.9,1065.0 L1420.3,1065.0 L1422.7,1033.1 L1465.8,1033.1 L1468.2,1071.9 L1511.8,1071.9 L1514.2,1063.5 L1557.8,1063.5 L1560.2,1060.9 L1603.5,1060.9 L1605.9,1037.5 L1649.4,1037.5 L1651.8,1047.4 L1694.8,1047.4 L1697.2,1086.4 L1740.3,1086.4 L1742.7,1092.5 L1786.4,1092.5 L1788.8,1061.4 L1831.8,1061.4 L1834.2,1087.7 L1877.8,1087.7 L1880.2,1095.2 L1923.8,1095.2 L1926.2,1099.9 L1969.4,1099.9 L1971.8,1071.5 L2015.5,1071.5 L2017.9,1093.9 L2060.2,1093.9 L2062.6,1153.8 L2106.3,1153.8 L2108.7,1160.9 L2152.8,1160.9 L2155.2,1154.5 L2198.5,1154.5 L2200.9,1169.1 L2244.6,1169.1 L2247.0,1177.1 L2290.8,1177.1 L2293.2,1167.1 L2335.8,1167.1 L2338.2,1150.9 L2371.5,1150.9 L2371.5,1156.4 L2338.2,1156.4 L2335.8,1172.2 L2293.2,1172.2 L2290.8,1182.1 L2247.0,1182.1 L2244.6,1174.9 L2200.9,1174.9 L2198.5,1161.0 L2155.2,1161.0 L2152.8,1168.5 L2108.7,1168.5 L2106.3,1161.9 L2062.6,1161.9 L2060.2,1100.9 L2017.9,1100.9 L2015.5,1077.8 L1971.8,1077.8 L1969.4,1105.4 L1926.2,1105.4 L1923.8,1101.0 L1880.2,1101.0 L1877.8,1093.7 L1834.2,1093.7 L1831.8,1066.5 L1788.8,1066.5 L1786.4,1098.1 L1742.7,1098.1 L1740.3,1093.6 L1697.2,1093.6 L1694.8,1059.6 L1651.8,1059.6 L1649.4,1045.2 L1605.9,1045.2 L1603.5,1068.1 L1560.2,1068.1 L1557.8,1069.5 L1514.2,1069.5 L1511.8,1077.4 L1468.2,1077.4 L1465.8,1038.1 L1422.7,1038.1 L1420.3,1070.0 L1376.9,1070.0 L1374.5,1050.4 L1331.0,1050.4 L1328.6,1067.9 L1285.2,1067.9 L1282.8,1064.1 L1239.0,1064.1 L1236.6,1047.1 L1192.2,1047.1 L1189.8,736.6 L1147.2,736.6 L1144.8,796.1 L1102.0,796.1 L1099.6,825.9 L1055.7,825.9 L1053.3,835.6 L1010.2,835.6 L1007.8,839.4 L998.0,839.4Z" fill="#8d90d6"/><path d="M998.0,832.5 L1007.8,832.5 L1010.2,828.7 L1053.3,828.7 L1055.7,817.9 L1099.6,817.9 L1102.0,786.9 L1144.8,786.9 L1147.2,726.4 L1189.8,726.4 L1192.2,1037.9 L1236.6,1037.9 L1239.0,1056.2 L1282.8,1056.2 L1285.2,1060.7 L1328.6,1060.7 L1331.0,1043.0 L1374.5,1043.0 L1376.9,1063.9 L1420.3,1063.9 L1422.7,1032.0 L1465.8,1032.0 L1468.2,1070.6 L1511.8,1070.6 L1514.2,1062.1 L1557.8,1062.1 L1560.2,1059.3 L1603.5,1059.3 L1605.9,1035.7 L1649.4,1035.7 L1651.8,1044.5 L1694.8,1044.5 L1697.2,1084.8 L1740.3,1084.8 L1742.7,1091.2 L1786.4,1091.2 L1788.8,1060.2 L1831.8,1060.2 L1834.2,1086.4 L1877.8,1086.4 L1880.2,1093.9 L1923.8,1093.9 L1926.2,1098.7 L1969.4,1098.7 L1971.8,1070.1 L2015.5,1070.1 L2017.9,1092.3 L2060.2,1092.3 L2062.6,1151.9 L2106.3,1151.9 L2108.7,1159.1 L2152.8,1159.1 L2155.2,1153.0 L2198.5,1153.0 L2200.9,1167.8 L2244.6,1167.8 L2247.0,1176.0 L2290.8,1176.0 L2293.2,1165.9 L2335.8,1165.9 L2338.2,1149.6 L2371.5,1149.6 L2371.5,1150.9 L2338.2,1150.9 L2335.8,1167.1 L2293.2,1167.1 L2290.8,1177.1 L2247.0,1177.1 L2244.6,1169.1 L2200.9,1169.1 L2198.5,1154.5 L2155.2,1154.5 L2152.8,1160.9 L2108.7,1160.9 L2106.3,1153.8 L2062.6,1153.8 L2060.2,1093.9 L2017.9,1093.9 L2015.5,1071.5 L1971.8,1071.5 L1969.4,1099.9 L1926.2,1099.9 L1923.8,1095.2 L1880.2,1095.2 L1877.8,1087.7 L1834.2,1087.7 L1831.8,1061.4 L1788.8,1061.4 L1786.4,1092.5 L1742.7,1092.5 L1740.3,1086.4 L1697.2,1086.4 L1694.8,1047.4 L1651.8,1047.4 L1649.4,1037.5 L1605.9,1037.5 L1603.5,1060.9 L1560.2,1060.9 L1557.8,1063.5 L1514.2,1063.5 L1511.8,1071.9 L1468.2,1071.9 L1465.8,1033.1 L1422.7,1033.1 L1420.3,1065.0 L1376.9,1065.0 L1374.5,1044.4 L1331.0,1044.4 L1328.6,1062.1 L1285.2,1062.1 L1282.8,1057.7 L1239.0,1057.7 L1236.6,1039.6 L1192.2,1039.6 L1189.8,728.4 L1147.2,728.4 L1144.8,788.6 L1102.0,788.6 L1099.6,819.4 L1055.7,819.4 L1053.3,830.0 L1010.2,830.0 L1007.8,833.8 L998.0,833.8Z" fill="#fbbf3c"/><path d="M998.0,827.7 L1007.8,827.7 L1010.2,823.9 L1053.3,823.9 L1055.7,812.5 L1099.6,812.5 L1102.0,780.6 L1144.8,780.6 L1147.2,719.4 L1189.8,719.4 L1192.2,1031.6 L1236.6,1031.6 L1239.0,1050.7 L1282.8,1050.7 L1285.2,1055.8 L1328.6,1055.8 L1331.0,1038.0 L1374.5,1038.0 L1376.9,1059.6 L1420.3,1059.6 L1422.7,1027.8 L1465.8,1027.8 L1468.2,1066.0 L1511.8,1066.0 L1514.2,1057.1 L1557.8,1057.1 L1560.2,1053.3 L1603.5,1053.3 L1605.9,1029.1 L1649.4,1029.1 L1651.8,1034.2 L1694.8,1034.2 L1697.2,1078.8 L1740.3,1078.8 L1742.7,1086.4 L1786.4,1086.4 L1788.8,1055.8 L1831.8,1055.8 L1834.2,1081.3 L1877.8,1081.3 L1880.2,1089.0 L1923.8,1089.0 L1926.2,1094.1 L1969.4,1094.1 L1971.8,1064.7 L2015.5,1064.7 L2017.9,1086.4 L2060.2,1086.4 L2062.6,1145.0 L2106.3,1145.0 L2108.7,1152.7 L2152.8,1152.7 L2155.2,1147.6 L2198.5,1147.6 L2200.9,1162.9 L2244.6,1162.9 L2247.0,1171.8 L2290.8,1171.8 L2293.2,1161.6 L2335.8,1161.6 L2338.2,1145.0 L2371.5,1145.0 L2371.5,1149.6 L2338.2,1149.6 L2335.8,1165.9 L2293.2,1165.9 L2290.8,1176.0 L2247.0,1176.0 L2244.6,1167.8 L2200.9,1167.8 L2198.5,1153.0 L2155.2,1153.0 L2152.8,1159.1 L2108.7,1159.1 L2106.3,1151.9 L2062.6,1151.9 L2060.2,1092.3 L2017.9,1092.3 L2015.5,1070.1 L1971.8,1070.1 L1969.4,1098.7 L1926.2,1098.7 L1923.8,1093.9 L1880.2,1093.9 L1877.8,1086.4 L1834.2,1086.4 L1831.8,1060.2 L1788.8,1060.2 L1786.4,1091.2 L1742.7,1091.2 L1740.3,1084.8 L1697.2,1084.8 L1694.8,1044.5 L1651.8,1044.5 L1649.4,1035.7 L1605.9,1035.7 L1603.5,1059.3 L1560.2,1059.3 L1557.8,1062.1 L1514.2,1062.1 L1511.8,1070.6 L1468.2,1070.6 L1465.8,1032.0 L1422.7,1032.0 L1420.3,1063.9 L1376.9,1063.9 L1374.5,1043.0 L1331.0,1043.0 L1328.6,1060.7 L1285.2,1060.7 L1282.8,1056.2 L1239.0,1056.2 L1236.6,1037.9 L1192.2,1037.9 L1189.8,726.4 L1147.2,726.4 L1144.8,786.9 L1102.0,786.9 L1099.6,817.9 L1055.7,817.9 L1053.3,828.7 L1010.2,828.7 L1007.8,832.5 L998.0,832.5Z" fill="#86ccb9"/><path d="M998.0,1217.6 L1007.8,1217.6 L1010.2,1217.6 L1053.3,1217.6 L1055.7,1213.8 L1099.6,1213.8 L1102.0,1188.3 L1144.8,1188.3 L1147.2,1217.6 L1189.8,1217.6 L1192.2,1207.5 L1236.6,1207.5 L1239.0,1217.6 L1282.8,1217.6 L1285.2,1217.6 L1328.6,1217.6 L1331.0,1202.4 L1374.5,1202.4 L1376.9,1217.6 L1420.3,1217.6 L1422.7,1184.5 L1465.8,1184.5 L1468.2,1224.0 L1511.8,1224.0 L1514.2,1221.5 L1557.8,1221.5 L1560.2,1224.0 L1603.5,1224.0 L1605.9,1171.8 L1649.4,1171.8 L1651.8,1215.1 L1694.8,1215.1 L1697.2,1215.1 L1740.3,1215.1 L1742.7,1212.6 L1786.4,1212.6 L1788.8,1176.9 L1831.8,1176.9 L1834.2,1218.9 L1877.8,1218.9 L1880.2,1215.1 L1923.8,1215.1 L1926.2,1216.4 L1969.4,1216.4 L1971.8,1194.7 L2015.5,1194.7 L2017.9,1221.5 L2060.2,1221.5 L2062.6,1216.4 L2106.3,1216.4 L2108.7,1217.6 L2152.8,1217.6 L2155.2,1204.9 L2198.5,1204.9 L2200.9,1213.8 L2244.6,1213.8 L2247.0,1217.6 L2290.8,1217.6 L2293.2,1208.7 L2335.8,1208.7 L2338.2,1194.7 L2371.5,1194.7" fill="none" stroke="#fbbf3c" stroke-width="3" stroke-linejoin="round"/><path d="M998.0,1211.3 L1007.8,1211.3 L1010.2,1211.3 L1053.3,1211.3 L1055.7,1207.5 L1099.6,1207.5 L1102.0,1183.2 L1144.8,1183.2 L1147.2,1212.6 L1189.8,1212.6 L1192.2,1202.4 L1236.6,1202.4 L1239.0,1212.6 L1282.8,1212.6 L1285.2,1212.6 L1328.6,1212.6 L1331.0,1197.3 L1374.5,1197.3 L1376.9,1211.3 L1420.3,1211.3 L1422.7,1178.1 L1465.8,1178.1 L1468.2,1218.9 L1511.8,1218.9 L1514.2,1215.1 L1557.8,1215.1 L1560.2,1218.9 L1603.5,1218.9 L1605.9,1166.7 L1649.4,1166.7 L1651.8,1202.4 L1694.8,1202.4 L1697.2,1204.9 L1740.3,1204.9 L1742.7,1206.2 L1786.4,1206.2 L1788.8,1171.8 L1831.8,1171.8 L1834.2,1202.4 L1877.8,1202.4 L1880.2,1208.7 L1923.8,1208.7 L1926.2,1211.3 L1969.4,1211.3 L1971.8,1188.3 L2015.5,1188.3 L2017.9,1213.8 L2060.2,1213.8 L2062.6,1212.6 L2106.3,1212.6 L2108.7,1215.1 L2152.8,1215.1 L2155.2,1201.1 L2198.5,1201.1 L2200.9,1211.3 L2244.6,1211.3 L2247.0,1215.1 L2290.8,1215.1 L2293.2,1204.9 L2335.8,1204.9 L2338.2,1190.9 L2371.5,1190.9" fill="none" stroke="#4db2a0" stroke-width="4" stroke-linejoin="round"/><path d="M998.0,871.1 L1007.8,871.1 L1010.2,867.2 L1053.3,867.2 L1055.7,862.1 L1099.6,862.1 L1102.0,837.9 L1144.8,837.9 L1147.2,783.1 L1189.8,783.1 L1192.2,1089.0 L1236.6,1089.0 L1239.0,1100.4 L1282.8,1100.4 L1285.2,1100.4 L1328.6,1100.4 L1331.0,1083.9 L1374.5,1083.9 L1376.9,1097.9 L1420.3,1097.9 L1422.7,1066.0 L1465.8,1066.0 L1468.2,1108.1 L1511.8,1108.1 L1514.2,1103.0 L1557.8,1103.0 L1560.2,1108.1 L1603.5,1108.1 L1605.9,1089.0 L1649.4,1089.0 L1651.8,1128.5 L1694.8,1128.5 L1697.2,1133.6 L1740.3,1133.6 L1742.7,1129.7 L1786.4,1129.7 L1788.8,1095.3 L1831.8,1095.3 L1834.2,1127.2 L1877.8,1127.2 L1880.2,1133.6 L1923.8,1133.6 L1926.2,1136.1 L1969.4,1136.1 L1971.8,1113.2 L2015.5,1113.2 L2017.9,1139.9 L2060.2,1139.9 L2062.6,1207.5 L2106.3,1207.5 L2108.7,1211.3 L2152.8,1211.3 L2155.2,1197.3 L2198.5,1197.3 L2200.9,1207.5 L2244.6,1207.5 L2247.0,1210.0 L2290.8,1210.0 L2293.2,1201.1 L2335.8,1201.1 L2338.2,1187.1 L2371.5,1187.1" fill="none" stroke="#55a6f2" stroke-width="2.4" stroke-linejoin="round"/><path d="M998.0,827.7 L1007.8,827.7 L1010.2,823.9 L1053.3,823.9 L1055.7,812.5 L1099.6,812.5 L1102.0,780.6 L1144.8,780.6 L1147.2,719.4 L1189.8,719.4 L1192.2,1031.6 L1236.6,1031.6 L1239.0,1050.7 L1282.8,1050.7 L1285.2,1055.8 L1328.6,1055.8 L1331.0,1038.0 L1374.5,1038.0 L1376.9,1059.6 L1420.3,1059.6 L1422.7,1027.8 L1465.8,1027.8 L1468.2,1066.0 L1511.8,1066.0 L1514.2,1057.1 L1557.8,1057.1 L1560.2,1053.3 L1603.5,1053.3 L1605.9,1029.1 L1649.4,1029.1 L1651.8,1034.2 L1694.8,1034.2 L1697.2,1078.8 L1740.3,1078.8 L1742.7,1086.4 L1786.4,1086.4 L1788.8,1055.8 L1831.8,1055.8 L1834.2,1081.3 L1877.8,1081.3 L1880.2,1089.0 L1923.8,1089.0 L1926.2,1094.1 L1969.4,1094.1 L1971.8,1064.7 L2015.5,1064.7 L2017.9,1086.4 L2060.2,1086.4 L2062.6,1145.0 L2106.3,1145.0 L2108.7,1152.7 L2152.8,1152.7 L2155.2,1147.6 L2198.5,1147.6 L2200.9,1162.9 L2244.6,1162.9 L2247.0,1171.8 L2290.8,1171.8 L2293.2,1161.6 L2335.8,1161.6 L2338.2,1145.0 L2371.5,1145.0" fill="none" stroke="#4db2a0" stroke-width="4.5" stroke-linejoin="round"/><path d="M998.0,895.3 L1006.5,895.3 L1011.5,892.7 L1052.0,892.7 L1057.0,887.6 L1098.3,887.6 L1103.3,863.4 L1143.5,863.4 L1148.5,894.0 L1188.5,894.0" fill="none" stroke="#5dba6a" stroke-width="3"/><line x1="1191" y1="783.1" x2="1191" y2="1211.3" stroke="#ffffff" stroke-width="2"/><line x1="1144.0" y1="1254.6" x2="1144.0" y2="1263.6" stroke="#555" stroke-width="2"/><line x1="1327.6" y1="1254.6" x2="1327.6" y2="1263.6" stroke="#555" stroke-width="2"/><line x1="1511.2" y1="1254.6" x2="1511.2" y2="1263.6" stroke="#555" stroke-width="2"/><line x1="1694.8" y1="1254.6" x2="1694.8" y2="1263.6" stroke="#555" stroke-width="2"/><line x1="1878.4" y1="1254.6" x2="1878.4" y2="1263.6" stroke="#555" stroke-width="2"/><line x1="2062.0" y1="1254.6" x2="2062.0" y2="1263.6" stroke="#555" stroke-width="2"/><line x1="2245.6" y1="1254.6" x2="2245.6" y2="1263.6" stroke="#555" stroke-width="2"/></svg>
<div class="t" style="left:900.6px;top:1243.1px;width:80px;text-align:right;font-size:23.4px;color:#6e6e6e;font-weight:normal;">0.00</div>
<div class="t" style="left:900.6px;top:1115.7px;width:80px;text-align:right;font-size:23.4px;color:#6e6e6e;font-weight:normal;">1.00</div>
<div class="t" style="left:900.6px;top:988.3px;width:80px;text-align:right;font-size:23.4px;color:#6e6e6e;font-weight:normal;">2.00</div>
<div class="t" style="left:900.6px;top:860.8px;width:80px;text-align:right;font-size:23.4px;color:#6e6e6e;font-weight:normal;">3.00</div>
<div class="t" style="left:900.6px;top:733.4px;width:80px;text-align:right;font-size:23.4px;color:#6e6e6e;font-weight:normal;">4.00</div>
<div class="t" style="left:900.6px;top:606.0px;width:80px;text-align:right;font-size:23.4px;color:#6e6e6e;font-weight:normal;">5.00</div>
<div class="t" style="left:1094.0px;top:1273.5px;width:100px;text-align:center;font-size:23px;color:#5e5e5e;font-weight:normal;">13:04</div>
<div class="t" style="left:1277.6px;top:1273.5px;width:100px;text-align:center;font-size:23px;color:#5e5e5e;font-weight:normal;">13:06</div>
<div class="t" style="left:1461.2px;top:1273.5px;width:100px;text-align:center;font-size:23px;color:#5e5e5e;font-weight:normal;">13:08</div>
<div class="t" style="left:1644.8px;top:1273.5px;width:100px;text-align:center;font-size:23px;color:#5e5e5e;font-weight:normal;">13:10</div>
<div class="t" style="left:1828.4px;top:1273.5px;width:100px;text-align:center;font-size:23px;color:#5e5e5e;font-weight:normal;">13:12</div>
<div class="t" style="left:2012.0px;top:1273.5px;width:100px;text-align:center;font-size:23px;color:#5e5e5e;font-weight:normal;">13:14</div>
<div class="t" style="left:2195.6px;top:1273.5px;width:100px;text-align:center;font-size:23px;color:#5e5e5e;font-weight:normal;">13:16</div>
<div class="t" style="left:2457.4px;top:607.9px;font-size:23.9px;color:#333333;font-weight:normal;">alertmanager-main-2</div>
<div class="t" style="left:2457.4px;top:654.3px;font-size:23.9px;color:#333333;font-weight:normal;">o2-openobserve-blocked-metri...</div>
<div class="t" style="left:2457.4px;top:700.8px;font-size:23.9px;color:#333333;font-weight:normal;">ingress-nginx-internal-contr...</div>
<div class="t" style="left:2457.4px;top:747.2px;font-size:23.9px;color:#333333;font-weight:normal;">prometheus-operator-59f99b78...</div>
<div class="t" style="left:2457.4px;top:793.7px;font-size:23.9px;color:#333333;font-weight:normal;">ebs-csi-controller-5b579799fb-ccgc2</div>
<div class="t" style="left:2457.4px;top:840.1px;font-size:23.9px;color:#333333;font-weight:normal;">ebs-csi-node-6k54f</div>
<div class="t" style="left:2457.4px;top:886.6px;font-size:23.9px;color:#333333;font-weight:normal;">blackbox-exporter-5868c7d7c4...</div>
<div class="t" style="left:2457.4px;top:933.0px;font-size:23.9px;color:#333333;font-weight:normal;">node-exporter-kbthq</div>
<div class="t" style="left:2457.4px;top:979.5px;font-size:23.9px;color:#333333;font-weight:normal;">grafana-869cd6465-p95lc</div>
<div class="t" style="left:2457.4px;top:1025.9px;font-size:23.9px;color:#333333;font-weight:normal;">prometheus-adapter-599c88b6c...</div>
<div class="t" style="left:2457.4px;top:1072.4px;font-size:23.9px;color:#333333;font-weight:normal;">o2-nats-2</div>
<div class="t" style="left:2457.4px;top:1118.8px;font-size:23.9px;color:#333333;font-weight:normal;">o2-nats-1</div>
<div class="t" style="left:2457.4px;top:1165.3px;font-size:23.9px;color:#333333;font-weight:normal;">o2c-openobserve-collector-ag...</div>
<div class="t" style="left:2457.4px;top:1211.7px;font-size:23.9px;color:#333333;font-weight:normal;">prometheus-k8s-0</div>
<svg class="b" style="left:0;top:0" width="2999" height="1719"><line x1="2397" y1="619.6" x2="2447" y2="619.6" stroke="#f0707a" stroke-width="4"/><circle cx="2422" cy="619.6" r="11" fill="#fff" stroke="#f0707a" stroke-width="4"/><line x1="2397" y1="666.1" x2="2447" y2="666.1" stroke="#fbb43c" stroke-width="4"/><circle cx="2422" cy="666.1" r="11" fill="#fff" stroke="#fbb43c" stroke-width="4"/><line x1="2397" y1="712.5" x2="2447" y2="712.5" stroke="#a9d46c" stroke-width="4"/><circle cx="2422" cy="712.5" r="11" fill="#fff" stroke="#a9d46c" stroke-width="4"/><line x1="2397" y1="759.0" x2="2447" y2="759.0" stroke="#e6d55c" stroke-width="4"/><circle cx="2422" cy="759.0" r="11" fill="#fff" stroke="#e6d55c" stroke-width="4"/><line x1="2397" y1="805.4" x2="2447" y2="805.4" stroke="#55a8f4" stroke-width="4"/><circle cx="2422" cy="805.4" r="11" fill="#fff" stroke="#55a8f4" stroke-width="4"/><line x1="2397" y1="851.9" x2="2447" y2="851.9" stroke="#c95fd6" stroke-width="4"/><circle cx="2422" cy="851.9" r="11" fill="#fff" stroke="#c95fd6" stroke-width="4"/><line x1="2397" y1="898.3" x2="2447" y2="898.3" stroke="#4cb3a1" stroke-width="4"/><circle cx="2422" cy="898.3" r="11" fill="#fff" stroke="#4cb3a1" stroke-width="4"/><line x1="2397" y1="944.8" x2="2447" y2="944.8" stroke="#6f72cf" stroke-width="4"/><circle cx="2422" cy="944.8" r="11" fill="#fff" stroke="#6f72cf" stroke-width="4"/><line x1="2397" y1="991.2" x2="2447" y2="991.2" stroke="#6bc06f" stroke-width="4"/><circle cx="2422" cy="991.2" r="11" fill="#fff" stroke="#6bc06f" stroke-width="4"/><line x1="2397" y1="1037.7" x2="2447" y2="1037.7" stroke="#e8d65c" stroke-width="4"/><circle cx="2422" cy="1037.7" r="11" fill="#fff" stroke="#e8d65c" stroke-width="4"/><line x1="2397" y1="1084.1" x2="2447" y2="1084.1" stroke="#6b6fcc" stroke-width="4"/><circle cx="2422" cy="1084.1" r="11" fill="#fff" stroke="#6b6fcc" stroke-width="4"/><line x1="2397" y1="1130.6" x2="2447" y2="1130.6" stroke="#6d74d0" stroke-width="4"/><circle cx="2422" cy="1130.6" r="11" fill="#fff" stroke="#6d74d0" stroke-width="4"/><line x1="2397" y1="1177.0" x2="2447" y2="1177.0" stroke="#5257c2" stroke-width="4"/><circle cx="2422" cy="1177.0" r="11" fill="#fff" stroke="#5257c2" stroke-width="4"/><line x1="2397" y1="1223.5" x2="2447" y2="1223.5" stroke="#6b6fcc" stroke-width="4"/><circle cx="2422" cy="1223.5" r="11" fill="#fff" stroke="#6b6fcc" stroke-width="4"/><path d="M2553 1289 L2583 1289 L2568 1260 Z" fill="#a9a9a9"/><path d="M2657 1259 L2687 1259 L2672 1288 Z" fill="#444"/></svg>
<div class="t" style="left:2604.7px;top:1262.5px;font-size:22.8px;color:#333;font-weight:normal;">1/2</div>
<div class="b" style="left:925px;top:1309px;width:1953px;height:80px;background:#c9cacd;"></div>
<div class="b" style="left:949px;top:1314px;width:184px;height:75px;background:#aeb5bc;border-radius:10px 10px 0 0;"></div>
<div class="t" style="left:968.8px;top:1334.3px;font-size:27.7px;color:#161616;font-weight:normal;">Query 1</div>
<svg class="b" style="left:1078px;top:1337px;" width="34" height="24" viewBox="0 0 34 24"><path d="M1 12 C6 3 12 1 17 1 C22 1 28 3 33 12 C28 21 22 23 17 23 C12 23 6 21 1 12 Z" fill="#161616"/><circle cx="17" cy="12" r="6.5" fill="#aeb5bc"/><circle cx="17" cy="12" r="3.8" fill="#161616"/></svg>
<div class="b" style="left:968px;top:1380px;width:145px;height:4px;background:#111;"></div>
<svg class="b" style="left:1154px;top:1338px;" width="24" height="24" viewBox="0 0 24 24"><path d="M12 1 L12 23 M1 12 L23 12" stroke="#1a1a1a" stroke-width="3"/></svg>
<div class="b" style="left:2249px;top:1334px;width:58px;height:32px;background:#c7dbe6;border-radius:16px;"></div>
<div class="b" style="left:2249px;top:1336px;width:28px;height:28px;border-radius:50%;background:#f4f4f4;box-shadow:0 1px 3px rgba(0,0,0,0.35);"></div>
<div class="t" style="left:2248.0px;top:1341.6px;width:30px;text-align:center;font-size:17px;color:#8a8a8a;font-weight:normal;font-family:'Liberation Serif', serif;"><i>fx</i></div>
<div class="b" style="left:2327px;top:1320px;width:244px;height:57px;background:#3f7994;border:2px solid #8a8d91;border-radius:20px;overflow:hidden;"></div>
<div class="b" style="left:2329px;top:1322px;width:94px;height:53px;background:#eeebe7;border-radius:18px 0 0 18px;"></div>
<div class="t" style="left:2325.5px;top:1335.2px;width:100px;text-align:center;font-size:26.5px;color:#161616;font-weight:normal;">SQL</div>
<div class="t" style="left:2426.0px;top:1335.1px;width:140px;text-align:center;font-size:26.6px;color:#ffffff;font-weight:bold;">PromQL</div>
<div class="b" style="left:2580px;top:1320px;width:273px;height:57px;background:#3f7994;border:2px solid #8a8d91;border-radius:20px;"></div>
<div class="b" style="left:2582px;top:1322px;width:130px;height:53px;background:#eeebe7;border-radius:18px 0 0 18px;"></div>
<div class="t" style="left:2577.0px;top:1333.2px;width:140px;text-align:center;font-size:28.8px;color:#161616;font-weight:normal;">Builder</div>
<div class="t" style="left:2712.0px;top:1335.3px;width:140px;text-align:center;font-size:26.3px;color:#ffffff;font-weight:bold;">Custom</div>
<div class="b" style="left:925px;top:1389px;width:1953px;height:105px;background:#f3f1f6;"></div>
<div class="b" style="left:941px;top:1406px;width:1784px;height:71px;background:#ffffff;border:2px solid #3f7994;border-radius:10px;"></div>
<svg class="b" style="left:971px;top:1431px;" width="32" height="32" viewBox="0 0 32 32"><defs><linearGradient id="sg" x1="0" y1="0" x2="1" y2="1"><stop offset="0" stop-color="#b45ad8"/><stop offset="1" stop-color="#e070c8"/></linearGradient></defs><path d="M16 1 C17.5 11 21 14.5 31 16 C21 17.5 17.5 21 16 31 C14.5 21 11 17.5 1 16 C11 14.5 14.5 11 16 1 Z" fill="url(#sg)"/></svg>
<div class="t" style="left:1023.3px;top:1428.1px;font-size:27.1px;color:#7a7a7e;font-weight:normal;">Ask AI to help with your query...</div>
<div class="b" style="left:2742px;top:1413px;width:56px;height:56px;border-radius:50%;background:#e4e4e6;"></div>
<svg class="b" style="left:2756px;top:1428px;" width="30" height="26" viewBox="0 0 30 26"><path d="M2 2 L28 13 L2 24 L5 13 Z" fill="#f6f6f7"/></svg>
<svg class="b" style="left:2828px;top:1432px;" width="20" height="20" viewBox="0 0 20 20"><path d="M2 2 L18 18 M18 2 L2 18" stroke="#6a6a6a" stroke-width="2.6"/></svg>
<div class="b" style="left:925px;top:1494px;width:1953px;height:217px;background:#f9fafa;border-radius:0 0 0 0;"></div>
<div class="t" style="left:927.0px;top:1500.2px;font-size:24px;color:#222;font-weight:normal;font-family:'Liberation Mono', monospace;">1</div>
<div class="t" style="left:946.0px;top:1500.2px;font-size:24px;color:#111;font-weight:normal;font-family:'Liberation Mono', monospace;letter-spacing:-0.05px;">k8s_pod_cpu_usage{k8s_node_name="$k8s_node_name"}</div>
</body></html>
